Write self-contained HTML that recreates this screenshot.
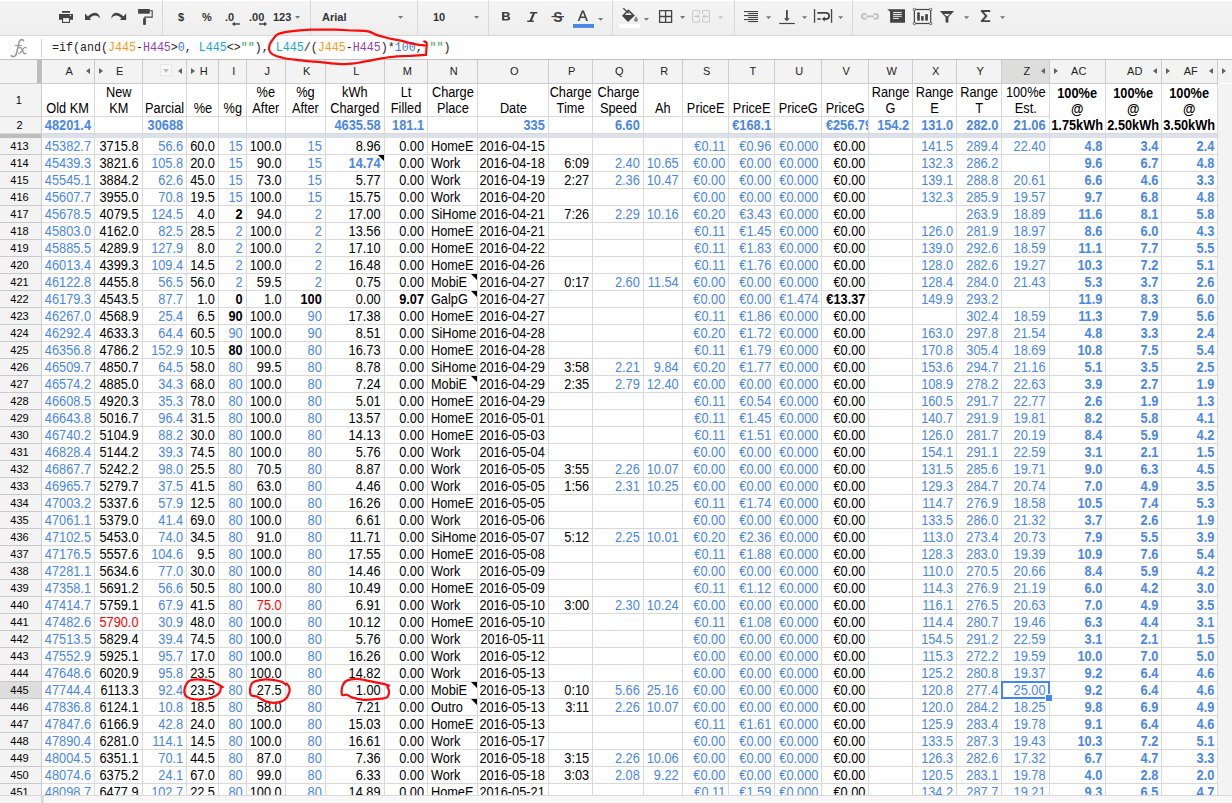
<!DOCTYPE html><html><head><meta charset="utf-8"><style>
*{margin:0;padding:0;box-sizing:border-box}
html,body{width:1232px;height:803px;overflow:hidden;background:#fff}
body{position:relative;font-family:"Liberation Sans",sans-serif;font-size:13px;color:#000}
.ab{position:absolute}
#tb{position:absolute;left:0;top:0;width:1232px;height:36px;background:linear-gradient(#f3f3f3,#f2f2f2 40%,#eeeeee);border-bottom:1px solid #d8d8d8;border-top:1px solid #ffffff}
.sep{position:absolute;top:0;width:1px;height:35px;background:#d9d9d9}
.tt{position:absolute;font-size:11px;font-weight:bold;color:#333;line-height:14px;top:10px}
.dd{position:absolute;width:0;height:0;border-left:2.5px solid transparent;border-right:2.5px solid transparent;border-top:3px solid #777}
#fb{position:absolute;left:0;top:36px;width:1232px;height:24px;background:#fff;border-bottom:1px solid #c4c4c4}
#fx{position:absolute;left:11px;top:36px;font-family:"Liberation Serif",serif;font-style:italic;font-size:20px;color:#9a9a9a;line-height:22px}
#fsep{position:absolute;left:41px;top:39px;width:1px;height:18px;background:#cfcfcf}
#ftxt{position:absolute;left:52px;top:40px;font-family:"Liberation Mono",monospace;font-size:13px;line-height:16px;color:#222;white-space:pre;transform:scaleX(0.896);transform-origin:0 50%}
.hc{position:absolute;top:60px;height:23px;padding-left:2.5px;background:#f3f3f3;text-align:center;font-size:11px;line-height:23px;color:#222}
.vl{position:absolute;width:1px;background:#d9d9d9}
.hl{position:absolute;height:1px;background:#d9d9d9}
.rh{position:absolute;left:0;width:41px;padding-right:2px;height:16px;background:#f3f3f3;text-align:center;font-size:11px;line-height:16px;color:#000}
.c{position:absolute;height:16px;line-height:16px;padding:0 3.3px 0 0;white-space:nowrap;text-align:right;font-size:14px;transform:scaleX(var(--sx));transform-origin:100% 50%}
.cl{transform-origin:0 50%;text-align:left;padding:0 0 0 3.2px}
:root{--sx:0.912}
.b{font-weight:bold}
.hd.b{padding-right:0}
.hd{position:absolute;text-align:center;line-height:16px;white-space:pre;font-size:14px;transform:scaleX(var(--sx));transform-origin:50% 50%}
.tri{position:absolute;width:0;height:0}
.cm{position:absolute;width:0;height:0;border-left:6px solid transparent;border-top:6px solid #000}
</style></head><body>
<div id="tb"></div>
<div class="sep" style="left:162px"></div>
<div class="sep" style="left:310px"></div>
<div class="sep" style="left:417px"></div>
<div class="sep" style="left:488px"></div>
<div class="sep" style="left:612px"></div>
<div class="sep" style="left:734px"></div>
<div class="sep" style="left:852px"></div>
<svg class="ab" style="left:0;top:0" width="1232" height="36" viewBox="0 0 1232 36">
<g fill="#444">
<!-- print -->
<rect x="62" y="11" width="8" height="1.8"/>
<path d="M59 14 H73 V19.8 H70 V23 H62 V19.8 H59 Z"/>
<rect x="63.1" y="18.1" width="5.9" height="3.8" fill="#f2f2f2"/>
<circle cx="70.4" cy="15.5" r="0.7" fill="#f2f2f2"/>
<!-- undo -->
<path d="M85 13.4 V19.9 H91.3 Z"/>
<path d="M87.3 17 C90.3 13.9 93 12.6 95.2 12.7 C98 12.9 99.6 15.2 100.1 18.6 C98.6 16.6 97 15.6 95 15.6 C93.2 15.6 91.4 16.6 89.3 18.9 Z"/>
<!-- redo -->
<path d="M126.2 13.4 V19.9 H119.9 Z"/>
<path d="M123.9 17 C120.9 13.9 118.2 12.6 116 12.7 C113.2 12.9 111.6 15.2 111.1 18.6 C112.6 16.6 114.2 15.6 116.2 15.6 C118 15.6 119.8 16.6 121.9 18.9 Z"/>
<!-- paint format -->
<rect x="138.1" y="9" width="11.7" height="4.7"/>
<path d="M149.8 10.8 H152.2 V17.1 H144.9 V18.5" fill="none" stroke="#444" stroke-width="1.1"/>
<rect x="143.1" y="18" width="2.8" height="7" rx="0.9"/>
<!-- text color A -->
<path d="M577.7 21 L581.8 10.6 H583.9 L588 21 H586.2 L585.1 18.1 H580.6 L579.5 21 Z M581.2 16.5 H584.5 L582.85 12.3 Z"/>
<rect x="573" y="24" width="21" height="3.9" fill="#4a86e8"/>
<!-- paint bucket -->
<path d="M622 15.7 L628.3 9.2 L634.8 15.4 L628 21.9 Z"/>
<path d="M624.9 14.9 L628.3 11.4 L631.9 14.9 Z" fill="#f4f4f4"/>
<path d="M623.3 8.2 L628.6 13.4" stroke="#444" stroke-width="1.3"/>
<path d="M636 16.2 C636.9 17.6 637.9 18.8 637.9 19.9 C637.9 21 637.1 21.7 636 21.7 C634.9 21.7 634.1 21 634.1 19.9 C634.1 18.8 635.1 17.6 636 16.2 Z" fill="#8a8a8a"/>
<rect x="619" y="24.1" width="20.8" height="3.8" fill="#fff"/>
<!-- borders -->
<path d="M659.6 10.6 H671.6 V22.4 H659.6 Z M665.6 10.6 V22.4 M659.6 16.5 H671.6" fill="none" stroke="#444" stroke-width="1.3"/>
<!-- merge (disabled) -->
<g fill="none" stroke="#c8c8c8" stroke-width="1">
<path d="M699.5 14.3 V10.6 H692.7 V22.1 H699.5 V18.6"/>
<path d="M702.6 14.3 V10.6 H709.4 V22.1 H702.6 V18.6"/>
<path d="M694.2 16.4 H698 M708 16.4 H704.2" stroke-width="1.2"/>
</g>
<path d="M697.5 14.2 L699.9 16.4 L697.5 18.6 Z M704.6 14.2 L702.2 16.4 L704.6 18.6 Z" fill="#c8c8c8"/>
<!-- align right -->
<rect x="744" y="11" width="14" height="1.1"/><rect x="748.2" y="13" width="9.8" height="1.1"/>
<rect x="744" y="15" width="14" height="1.1"/><rect x="748.2" y="17" width="9.8" height="1.1"/>
<rect x="744" y="19" width="14" height="1.1"/><rect x="748.2" y="21" width="9.8" height="1.1"/>
<!-- valign bottom -->
<rect x="786" y="10.1" width="1.8" height="8.6"/>
<path d="M783.9 18.2 H789.9 L786.9 21.3 Z"/>
<rect x="779.2" y="22.9" width="15.6" height="1.2"/>
<!-- wrap -->
<rect x="813.9" y="9" width="1.3" height="13.8"/><rect x="830.9" y="9" width="1.3" height="13.8"/>
<path d="M817.3 12.8 H825.8 C827.8 12.8 829.1 14.2 829.1 15.9 C829.1 17.7 827.8 19 825.8 19 H824" fill="none" stroke="#444" stroke-width="1.8"/>
<path d="M824.8 16.4 L821.8 19 L824.8 21.6 Z"/>
<rect x="817.3" y="18.2" width="3.4" height="1.6"/>
<!-- link (disabled) -->
<g fill="none" stroke="#c4c4c4" stroke-width="2">
<path d="M866.5 13.9 H864.4 C862.7 13.9 861.9 15 861.9 16.35 C861.9 17.7 862.7 18.8 864.4 18.8 H866.5"/>
<path d="M873.6 13.9 H875.6 C877.3 13.9 878.1 15 878.1 16.35 C878.1 17.7 877.3 18.8 875.6 18.8 H873.6"/>
<path d="M866 16.35 H874"/>
</g>
<!-- comment -->
<path d="M887.2 9.2 H905 V22.8 H890.1 V11.8 Z"/>
<g fill="#f2f2f2"><rect x="893" y="11.9" width="8.8" height="1"/><rect x="893" y="13.9" width="8.8" height="1"/><rect x="893" y="15.8" width="8.8" height="1"/><rect x="893" y="17.9" width="5.9" height="1"/></g>
<!-- chart -->
<rect x="914.4" y="9.5" width="16.3" height="14" fill="none" stroke="#444" stroke-width="1.2"/>
<g fill="#f2f2f2" stroke="#444" stroke-width="0.8"><circle cx="914.4" cy="9.5" r="1.2"/><circle cx="930.7" cy="9.5" r="1.2"/><circle cx="914.4" cy="23.5" r="1.2"/><circle cx="930.7" cy="23.5" r="1.2"/></g>
<rect x="917.2" y="12.4" width="2.6" height="8.2"/><rect x="921.1" y="16.1" width="2.6" height="4.5"/><rect x="925.2" y="14.2" width="2.7" height="6.4"/>
<!-- filter -->
<path d="M939.9 10.9 H954.1 L948.4 17.3 V22.5 H945.6 V17.3 Z M943.8 14 L947 16.6 L950.2 14 Z" fill-rule="evenodd"/>
<!-- sigma -->
<path d="M980.9 10.1 H990.2 V11.9 H983.9 L987.6 16 L983.9 20.3 H990.2 V22 H980.9 V20.5 L985 16 L980.9 11.6 Z"/>
</g>
<!-- dropdown arrows -->
<g fill="#777">
<path d="M295 16 H300.2 L297.6 18.8 Z"/>
<path d="M398 16 H403.2 L400.6 18.8 Z"/>
<path d="M474 16 H479.2 L476.6 18.8 Z"/>
<path d="M598 18 H603.2 L600.6 20.8 Z"/>
<path d="M643.8 18 H649 L646.4 20.8 Z"/>
<path d="M680 16.1 H685.2 L682.6 18.9 Z"/>
<path d="M766 16.2 H771.2 L768.6 19 Z"/>
<path d="M802 16.2 H807.2 L804.6 19 Z"/>
<path d="M838 16.2 H843.2 L840.6 19 Z"/>
<path d="M964 16.2 H969.2 L966.6 19 Z"/>
<path d="M1000 16.2 H1005.2 L1002.6 19 Z"/>
</g>
<path d="M718 16.2 H723.2 L720.6 19 Z" fill="#c8c8c8"/>
<!-- .0 / .00 arrows -->
<path d="M231.8 24 L234.8 21.8 V23.3 H239.8 V24.7 H234.8 V26.2 Z" fill="#444"/>
<path d="M267.2 24 L264.2 21.8 V23.3 H259 V24.7 H264.2 V26.2 Z" fill="#444"/>
</svg>
<div class="tt" style="left:178px">$</div>
<div class="tt" style="left:202px">%</div>
<div class="tt" style="left:225px">.0</div>
<div class="tt" style="left:249px">.00</div>
<div class="tt" style="left:273px">123</div>
<div class="tt" style="left:322px">Arial</div>
<div class="tt" style="left:433px">10</div>
<svg class="ab" style="left:501.8px;top:12.2px" width="9" height="9" viewBox="0 0 9 9"><path fill-rule="evenodd" fill="#444" d="M0 0 H4.7 C6.7 0 7.7 1 7.7 2.3 C7.7 3.3 7.1 3.9 6.3 4.2 C7.4 4.5 8.2 5.3 8.2 6.4 C8.2 7.8 7.1 8.5 5.1 8.5 H0 Z M2.3 1.6 V3.5 H4.3 C5 3.5 5.4 3.2 5.4 2.55 C5.4 1.9 5 1.6 4.3 1.6 Z M2.3 5 V6.9 H4.6 C5.4 6.9 5.8 6.5 5.8 5.95 C5.8 5.4 5.4 5 4.6 5 Z"/></svg>
<svg class="ab" style="left:527px;top:12px" width="11" height="10" viewBox="0 0 11 10"><path d="M3 0 H10.5 L10.2 1.6 H8 L5 8.4 H7 L6.7 10 H0 L0.3 8.4 H2.6 L5.6 1.6 H2.7 Z" fill="#444"/></svg>
<svg class="ab" style="left:551px;top:11px" width="14" height="12" viewBox="0 0 14 12">
<text x="6.8" y="10.6" text-anchor="middle" font-family="Liberation Sans" font-weight="bold" font-size="14" fill="#444">S</text>
<rect x="0.5" y="5" width="12.5" height="1.2" fill="#444"/></svg>
<div id="fb"></div>
<svg class="ab" style="left:0;top:0" width="40" height="60" viewBox="0 0 40 60"><g fill="none" stroke="#999" stroke-linecap="round"><path d="M23.6 40.6 C23.1 39.7 22.3 39.3 21.4 39.5 C19.7 39.9 19 41.8 18.5 44.3 L16.7 52.6 C16.1 55.3 14.7 56.7 12.8 56.6 C12.1 56.5 11.6 56.1 11.4 55.6" stroke-width="1.6"/><path d="M15.4 45.5 H21.6" stroke-width="1.1"/><path d="M18.9 47.9 C19.8 47 20.9 47.2 21.5 48.4 L23.6 52.9 C24.1 53.9 25 54.1 25.9 53.2" stroke-width="1.4"/><path d="M26.3 48 C25.8 47 24.8 47 24 47.9 L20.3 52.8 C19.8 53.6 19.1 53.7 18.6 53.2" stroke-width="1.1"/></g></svg>
<div id="fsep"></div>
<div id="ftxt"><span style="color:#222">=if(and(</span><span style="color:#f59a23">J445</span><span style="color:#222">-</span><span style="color:#8e44ad">H445</span><span style="color:#222">&gt;</span><span style="color:#3d79e0">0</span><span style="color:#222">, </span><span style="color:#1aa3d9">L445</span><span style="color:#222">&lt;&gt;</span><span style="color:#3aa345">&quot;&quot;</span><span style="color:#222">), </span><span style="color:#1aa3d9">L445</span><span style="color:#222">/(</span><span style="color:#f59a23">J445</span><span style="color:#222">-</span><span style="color:#8e44ad">H445</span><span style="color:#222">)*</span><span style="color:#3d79e0">100</span><span style="color:#222">, </span><span style="color:#3aa345">&quot;&quot;</span><span style="color:#222">)</span></div>
<div class="ab" style="left:0;top:59px;width:1232px;height:1px;background:#c0c0c0"></div>
<div class="ab" style="left:0;top:60px;width:1232px;height:23px;background:#f3f3f3"></div>
<div class="ab" style="left:0;top:83px;width:1218px;height:1px;background:#cbcbcb"></div>
<div class="hc" style="left:42px;width:52px;background:#f3f3f3">A</div>
<div class="ab" style="left:94px;top:60px;width:1px;height:23px;background:#cccccc"></div>
<div class="hc" style="left:95px;width:47px;background:#f3f3f3">E</div>
<div class="ab" style="left:142px;top:60px;width:1px;height:23px;background:#cccccc"></div>
<div class="hc" style="left:143px;width:43px;background:#f3f3f3"></div>
<div class="ab" style="left:186px;top:60px;width:1px;height:23px;background:#cccccc"></div>
<div class="hc" style="left:187px;width:31px;background:#f3f3f3">H</div>
<div class="ab" style="left:218px;top:60px;width:1px;height:23px;background:#cccccc"></div>
<div class="hc" style="left:219px;width:27px;background:#f3f3f3">I</div>
<div class="ab" style="left:246px;top:60px;width:1px;height:23px;background:#cccccc"></div>
<div class="hc" style="left:247px;width:38px;background:#f3f3f3">J</div>
<div class="ab" style="left:285px;top:60px;width:1px;height:23px;background:#cccccc"></div>
<div class="hc" style="left:286px;width:39px;background:#f3f3f3">K</div>
<div class="ab" style="left:325px;top:60px;width:1px;height:23px;background:#cccccc"></div>
<div class="hc" style="left:326px;width:58px;background:#f3f3f3">L</div>
<div class="ab" style="left:384px;top:60px;width:1px;height:23px;background:#cccccc"></div>
<div class="hc" style="left:385px;width:42px;background:#f3f3f3">M</div>
<div class="ab" style="left:427px;top:60px;width:1px;height:23px;background:#cccccc"></div>
<div class="hc" style="left:428px;width:49px;background:#f3f3f3">N</div>
<div class="ab" style="left:477px;top:60px;width:1px;height:23px;background:#cccccc"></div>
<div class="hc" style="left:478px;width:70px;background:#f3f3f3">O</div>
<div class="ab" style="left:548px;top:60px;width:1px;height:23px;background:#cccccc"></div>
<div class="hc" style="left:549px;width:43px;background:#f3f3f3">P</div>
<div class="ab" style="left:592px;top:60px;width:1px;height:23px;background:#cccccc"></div>
<div class="hc" style="left:593px;width:50px;background:#f3f3f3">Q</div>
<div class="ab" style="left:643px;top:60px;width:1px;height:23px;background:#cccccc"></div>
<div class="hc" style="left:644px;width:38px;background:#f3f3f3">R</div>
<div class="ab" style="left:682px;top:60px;width:1px;height:23px;background:#cccccc"></div>
<div class="hc" style="left:683px;width:45px;background:#f3f3f3">S</div>
<div class="ab" style="left:728px;top:60px;width:1px;height:23px;background:#cccccc"></div>
<div class="hc" style="left:729px;width:45px;background:#f3f3f3">T</div>
<div class="ab" style="left:774px;top:60px;width:1px;height:23px;background:#cccccc"></div>
<div class="hc" style="left:775px;width:46px;background:#f3f3f3">U</div>
<div class="ab" style="left:821px;top:60px;width:1px;height:23px;background:#cccccc"></div>
<div class="hc" style="left:822px;width:46px;background:#f3f3f3">V</div>
<div class="ab" style="left:868px;top:60px;width:1px;height:23px;background:#cccccc"></div>
<div class="hc" style="left:869px;width:43px;background:#f3f3f3">W</div>
<div class="ab" style="left:912px;top:60px;width:1px;height:23px;background:#cccccc"></div>
<div class="hc" style="left:913px;width:43px;background:#f3f3f3">X</div>
<div class="ab" style="left:956px;top:60px;width:1px;height:23px;background:#cccccc"></div>
<div class="hc" style="left:957px;width:44px;background:#f3f3f3">Y</div>
<div class="ab" style="left:1001px;top:60px;width:1px;height:23px;background:#cccccc"></div>
<div class="hc" style="left:1002px;width:47px;background:#dddddd">Z</div>
<div class="ab" style="left:1049px;top:60px;width:1px;height:23px;background:#cccccc"></div>
<div class="hc" style="left:1050px;width:55px;background:#f3f3f3">AC</div>
<div class="ab" style="left:1105px;top:60px;width:1px;height:23px;background:#cccccc"></div>
<div class="hc" style="left:1106px;width:55px;background:#f3f3f3">AD</div>
<div class="ab" style="left:1161px;top:60px;width:1px;height:23px;background:#cccccc"></div>
<div class="hc" style="left:1162px;width:55px;background:#f3f3f3">AF</div>
<div class="ab" style="left:1217px;top:60px;width:1px;height:23px;background:#cccccc"></div>
<div class="ab" style="left:37px;top:60px;width:5px;height:23px;background:#bdbdbd"></div>
<div class="ab" style="left:1218px;top:84px;width:14px;height:719px;background:#f3f3f3"></div>
<div class="ab" style="left:1218px;top:60px;width:14px;height:23px;background:#f3f3f3"></div>
<div class="tri" style="left:86px;top:68px;border-top:3.75px solid transparent;border-bottom:3.75px solid transparent;border-right:4.5px solid #616161"></div>
<div class="tri" style="left:99px;top:68px;border-top:3.75px solid transparent;border-bottom:3.75px solid transparent;border-left:4.5px solid #616161"></div>
<div class="tri" style="left:178px;top:68px;border-top:3.75px solid transparent;border-bottom:3.75px solid transparent;border-right:4.5px solid #616161"></div>
<div class="tri" style="left:191px;top:68px;border-top:3.75px solid transparent;border-bottom:3.75px solid transparent;border-left:4.5px solid #616161"></div>
<div class="tri" style="left:1041px;top:68px;border-top:3.75px solid transparent;border-bottom:3.75px solid transparent;border-right:4.5px solid #616161"></div>
<div class="tri" style="left:1054px;top:68px;border-top:3.75px solid transparent;border-bottom:3.75px solid transparent;border-left:4.5px solid #616161"></div>
<div class="tri" style="left:1153px;top:68px;border-top:3.75px solid transparent;border-bottom:3.75px solid transparent;border-right:4.5px solid #616161"></div>
<div class="tri" style="left:1166px;top:68px;border-top:3.75px solid transparent;border-bottom:3.75px solid transparent;border-left:4.5px solid #616161"></div>
<div class="tri" style="left:1209px;top:68px;border-top:3.75px solid transparent;border-bottom:3.75px solid transparent;border-right:4.5px solid #616161"></div>
<div class="tri" style="left:1222px;top:68px;border-top:3.75px solid transparent;border-bottom:3.75px solid transparent;border-left:4.5px solid #616161"></div>
<div class="ab" style="left:160px;top:64px;width:12px;height:12px;background:#f8f8f8;border:1px solid #e4e4e4"></div>
<div class="tri" style="left:163px;top:69px;border-left:3.5px solid transparent;border-right:3.5px solid transparent;border-top:4px solid #bdbdbd"></div>
<div class="ab" style="left:0;top:84px;width:41px;height:49px;background:#f3f3f3"></div>
<div class="ab" style="left:0;top:92px;width:37.5px;text-align:center;font-size:11px;line-height:16px">1</div>
<div class="ab" style="left:0;top:117px;width:39px;text-align:center;font-size:11px;line-height:16px">2</div>
<div class="ab" style="left:0;top:116px;width:41px;height:1px;background:#d0d0d0"></div>
<div class="hd" style="left:29.49px;top:100px;width:77.02px;height:16px">Old KM</div>
<div class="hd" style="left:82.73px;top:84px;width:71.54px;height:32px">New
KM</div>
<div class="hd" style="left:130.93px;top:100px;width:67.15px;height:16px">Parcial</div>
<div class="hd" style="left:175.50px;top:100px;width:53.99px;height:16px">%e</div>
<div class="hd" style="left:207.70px;top:100px;width:49.61px;height:16px">%g</div>
<div class="hd" style="left:235.17px;top:84px;width:61.67px;height:32px">%e
After</div>
<div class="hd" style="left:274.12px;top:84px;width:62.76px;height:32px">%g
After</div>
<div class="hd" style="left:313.20px;top:84px;width:83.60px;height:32px">kWh
Charged</div>
<div class="hd" style="left:372.97px;top:84px;width:66.05px;height:32px">Lt
Filled</div>
<div class="hd" style="left:415.64px;top:84px;width:73.73px;height:32px">Charge
Place</div>
<div class="hd" style="left:464.62px;top:100px;width:96.75px;height:16px">Date</div>
<div class="hd" style="left:536.93px;top:84px;width:67.15px;height:32px">Charge
Time</div>
<div class="hd" style="left:580.59px;top:84px;width:74.82px;height:32px">Charge
Speed</div>
<div class="hd" style="left:632.17px;top:100px;width:61.67px;height:16px">Ah</div>
<div class="hd" style="left:670.83px;top:100px;width:69.34px;height:16px">PriceE</div>
<div class="hd" style="left:716.83px;top:100px;width:69.34px;height:16px">PriceE</div>
<div class="hd" style="left:762.78px;top:100px;width:70.44px;height:16px">PriceG</div>
<div class="hd" style="left:809.78px;top:100px;width:70.44px;height:16px">PriceG</div>
<div class="hd" style="left:856.93px;top:84px;width:67.15px;height:32px">Range
G</div>
<div class="hd" style="left:900.93px;top:84px;width:67.15px;height:32px">Range
E</div>
<div class="hd" style="left:944.88px;top:84px;width:68.25px;height:32px">Range
T</div>
<div class="hd" style="left:989.73px;top:84px;width:71.54px;height:32px">100%e
Est.</div>
<div class="hd b" style="left:1037.35px;top:85px;width:80.31px;height:48px">100%e
@
1.75kWh</div>
<div class="hd b" style="left:1093.35px;top:85px;width:80.31px;height:48px">100%e
@
2.50kWh</div>
<div class="hd b" style="left:1149.35px;top:85px;width:80.31px;height:48px">100%e
@
3.50kWh</div>
<div class="c b" style="left:16.98px;top:117px;width:77.02px;color:#4a86e8">48201.4</div>
<div class="c b" style="left:118.85px;top:117px;width:67.15px;color:#4a86e8">30688</div>
<div class="c b" style="left:300.40px;top:117px;width:83.60px;color:#4a86e8">4635.58</div>
<div class="c b" style="left:360.95px;top:117px;width:66.05px;color:#4a86e8">181.1</div>
<div class="c b" style="left:451.25px;top:117px;width:96.75px;color:#4a86e8">335</div>
<div class="c b" style="left:568.18px;top:117px;width:74.82px;color:#4a86e8">6.60</div>
<div class="c b" style="left:704.66px;top:117px;width:69.34px;color:#4a86e8">€168.1</div>
<div class="c b" style="left:844.85px;top:117px;width:67.15px;color:#4a86e8">154.2</div>
<div class="c b" style="left:888.85px;top:117px;width:67.15px;color:#4a86e8">131.0</div>
<div class="c b" style="left:932.75px;top:117px;width:68.25px;color:#4a86e8">282.0</div>
<div class="c b" style="left:977.46px;top:117px;width:71.54px;color:#4a86e8">21.06</div>
<div class="ab" style="left:822px;top:117px;width:46px;height:16px;overflow:hidden"><div class="c b cl" style="left:0;top:0;width:90px;color:#4a86e8;padding-left:4.3px">€256.79</div></div>
<div class="hl" style="left:42px;top:116px;width:1007px"></div>
<div class="ab" style="left:0;top:133px;width:1218px;height:1px;background:#d9d9d9"></div>
<div class="ab" style="left:42px;top:134px;width:1176px;height:4px;background:#dbe0e9"></div>
<div class="ab" style="left:0;top:134px;width:42px;height:4px;background:#bdbdbd"></div>
<div class="ab" style="left:0;top:138px;width:41px;height:657px;background:#f3f3f3"></div>
<div class="rh" style="top:138px;background:#f3f3f3">413</div>
<div class="ab" style="left:0;top:154px;width:41px;height:1px;background:#c9c9c9"></div>
<div class="hl" style="left:42px;top:154px;width:1176px"></div>
<div class="c" style="left:16.98px;top:138px;width:77.02px;color:#4a86e8">45382.7</div>
<div class="c" style="left:70.46px;top:138px;width:71.54px;color:#000">3715.8</div>
<div class="c" style="left:118.85px;top:138px;width:67.15px;color:#4a86e8">56.6</div>
<div class="c" style="left:164.01px;top:138px;width:53.99px;color:#000">60.0</div>
<div class="c" style="left:196.39px;top:138px;width:49.61px;color:#4a86e8">15</div>
<div class="c" style="left:223.33px;top:138px;width:61.67px;color:#000">100.0</div>
<div class="c" style="left:262.24px;top:138px;width:62.76px;color:#4a86e8">15</div>
<div class="c" style="left:300.40px;top:138px;width:83.60px;color:#000">8.96</div>
<div class="c" style="left:360.95px;top:138px;width:66.05px;color:#000">0.00</div>
<div class="c cl" style="left:428.00px;top:138px;width:73.73px;color:#000">HomeE</div>
<div class="c" style="left:451.25px;top:138px;width:96.75px;color:#000">2016-04-15</div>
<div class="c" style="left:658.66px;top:138px;width:69.34px;color:#4a86e8">€0.11</div>
<div class="c" style="left:704.66px;top:138px;width:69.34px;color:#4a86e8">€0.96</div>
<div class="c" style="left:750.56px;top:138px;width:70.44px;color:#4a86e8">€0.000</div>
<div class="c" style="left:797.56px;top:138px;width:70.44px;color:#000">€0.00</div>
<div class="c" style="left:888.85px;top:138px;width:67.15px;color:#4a86e8">141.5</div>
<div class="c" style="left:932.75px;top:138px;width:68.25px;color:#4a86e8">289.4</div>
<div class="c" style="left:977.46px;top:138px;width:71.54px;color:#4a86e8">22.40</div>
<div class="c b" style="left:1024.69px;top:138px;width:80.31px;color:#4a86e8">4.8</div>
<div class="c b" style="left:1080.69px;top:138px;width:80.31px;color:#4a86e8">3.4</div>
<div class="c b" style="left:1136.69px;top:138px;width:80.31px;color:#4a86e8">2.4</div>
<div class="rh" style="top:155px;background:#f3f3f3">414</div>
<div class="ab" style="left:0;top:171px;width:41px;height:1px;background:#c9c9c9"></div>
<div class="hl" style="left:42px;top:171px;width:1176px"></div>
<div class="c" style="left:16.98px;top:155px;width:77.02px;color:#4a86e8">45439.3</div>
<div class="c" style="left:70.46px;top:155px;width:71.54px;color:#000">3821.6</div>
<div class="c" style="left:118.85px;top:155px;width:67.15px;color:#4a86e8">105.8</div>
<div class="c" style="left:164.01px;top:155px;width:53.99px;color:#000">20.0</div>
<div class="c" style="left:196.39px;top:155px;width:49.61px;color:#4a86e8">15</div>
<div class="c" style="left:223.33px;top:155px;width:61.67px;color:#000">90.0</div>
<div class="c" style="left:262.24px;top:155px;width:62.76px;color:#4a86e8">15</div>
<div class="c b" style="left:300.40px;top:155px;width:83.60px;color:#4a86e8">14.74</div>
<div class="cm" style="left:378px;top:155px"></div>
<div class="c" style="left:360.95px;top:155px;width:66.05px;color:#000">0.00</div>
<div class="c cl" style="left:428.00px;top:155px;width:73.73px;color:#000">Work</div>
<div class="c" style="left:451.25px;top:155px;width:96.75px;color:#000">2016-04-18</div>
<div class="c" style="left:524.85px;top:155px;width:67.15px;color:#000">6:09</div>
<div class="c" style="left:568.18px;top:155px;width:74.82px;color:#4a86e8">2.40</div>
<div class="c" style="left:620.33px;top:155px;width:61.67px;color:#4a86e8">10.65</div>
<div class="c" style="left:658.66px;top:155px;width:69.34px;color:#4a86e8">€0.00</div>
<div class="c" style="left:704.66px;top:155px;width:69.34px;color:#4a86e8">€0.00</div>
<div class="c" style="left:750.56px;top:155px;width:70.44px;color:#4a86e8">€0.000</div>
<div class="c" style="left:797.56px;top:155px;width:70.44px;color:#000">€0.00</div>
<div class="c" style="left:888.85px;top:155px;width:67.15px;color:#4a86e8">132.3</div>
<div class="c" style="left:932.75px;top:155px;width:68.25px;color:#4a86e8">286.2</div>
<div class="c b" style="left:1024.69px;top:155px;width:80.31px;color:#4a86e8">9.6</div>
<div class="c b" style="left:1080.69px;top:155px;width:80.31px;color:#4a86e8">6.7</div>
<div class="c b" style="left:1136.69px;top:155px;width:80.31px;color:#4a86e8">4.8</div>
<div class="rh" style="top:172px;background:#f3f3f3">415</div>
<div class="ab" style="left:0;top:188px;width:41px;height:1px;background:#c9c9c9"></div>
<div class="hl" style="left:42px;top:188px;width:1176px"></div>
<div class="c" style="left:16.98px;top:172px;width:77.02px;color:#4a86e8">45545.1</div>
<div class="c" style="left:70.46px;top:172px;width:71.54px;color:#000">3884.2</div>
<div class="c" style="left:118.85px;top:172px;width:67.15px;color:#4a86e8">62.6</div>
<div class="c" style="left:164.01px;top:172px;width:53.99px;color:#000">45.0</div>
<div class="c" style="left:196.39px;top:172px;width:49.61px;color:#4a86e8">15</div>
<div class="c" style="left:223.33px;top:172px;width:61.67px;color:#000">73.0</div>
<div class="c" style="left:262.24px;top:172px;width:62.76px;color:#4a86e8">15</div>
<div class="c" style="left:300.40px;top:172px;width:83.60px;color:#000">5.77</div>
<div class="c" style="left:360.95px;top:172px;width:66.05px;color:#000">0.00</div>
<div class="c cl" style="left:428.00px;top:172px;width:73.73px;color:#000">Work</div>
<div class="c" style="left:451.25px;top:172px;width:96.75px;color:#000">2016-04-19</div>
<div class="c" style="left:524.85px;top:172px;width:67.15px;color:#000">2:27</div>
<div class="c" style="left:568.18px;top:172px;width:74.82px;color:#4a86e8">2.36</div>
<div class="c" style="left:620.33px;top:172px;width:61.67px;color:#4a86e8">10.47</div>
<div class="c" style="left:658.66px;top:172px;width:69.34px;color:#4a86e8">€0.00</div>
<div class="c" style="left:704.66px;top:172px;width:69.34px;color:#4a86e8">€0.00</div>
<div class="c" style="left:750.56px;top:172px;width:70.44px;color:#4a86e8">€0.000</div>
<div class="c" style="left:797.56px;top:172px;width:70.44px;color:#000">€0.00</div>
<div class="c" style="left:888.85px;top:172px;width:67.15px;color:#4a86e8">139.1</div>
<div class="c" style="left:932.75px;top:172px;width:68.25px;color:#4a86e8">288.8</div>
<div class="c" style="left:977.46px;top:172px;width:71.54px;color:#4a86e8">20.61</div>
<div class="c b" style="left:1024.69px;top:172px;width:80.31px;color:#4a86e8">6.6</div>
<div class="c b" style="left:1080.69px;top:172px;width:80.31px;color:#4a86e8">4.6</div>
<div class="c b" style="left:1136.69px;top:172px;width:80.31px;color:#4a86e8">3.3</div>
<div class="rh" style="top:189px;background:#f3f3f3">416</div>
<div class="ab" style="left:0;top:205px;width:41px;height:1px;background:#c9c9c9"></div>
<div class="hl" style="left:42px;top:205px;width:1176px"></div>
<div class="c" style="left:16.98px;top:189px;width:77.02px;color:#4a86e8">45607.7</div>
<div class="c" style="left:70.46px;top:189px;width:71.54px;color:#000">3955.0</div>
<div class="c" style="left:118.85px;top:189px;width:67.15px;color:#4a86e8">70.8</div>
<div class="c" style="left:164.01px;top:189px;width:53.99px;color:#000">19.5</div>
<div class="c" style="left:196.39px;top:189px;width:49.61px;color:#4a86e8">15</div>
<div class="c" style="left:223.33px;top:189px;width:61.67px;color:#000">100.0</div>
<div class="c" style="left:262.24px;top:189px;width:62.76px;color:#4a86e8">15</div>
<div class="c" style="left:300.40px;top:189px;width:83.60px;color:#000">15.75</div>
<div class="c" style="left:360.95px;top:189px;width:66.05px;color:#000">0.00</div>
<div class="c cl" style="left:428.00px;top:189px;width:73.73px;color:#000">Work</div>
<div class="c" style="left:451.25px;top:189px;width:96.75px;color:#000">2016-04-20</div>
<div class="c" style="left:658.66px;top:189px;width:69.34px;color:#4a86e8">€0.00</div>
<div class="c" style="left:704.66px;top:189px;width:69.34px;color:#4a86e8">€0.00</div>
<div class="c" style="left:750.56px;top:189px;width:70.44px;color:#4a86e8">€0.000</div>
<div class="c" style="left:797.56px;top:189px;width:70.44px;color:#000">€0.00</div>
<div class="c" style="left:888.85px;top:189px;width:67.15px;color:#4a86e8">132.3</div>
<div class="c" style="left:932.75px;top:189px;width:68.25px;color:#4a86e8">285.9</div>
<div class="c" style="left:977.46px;top:189px;width:71.54px;color:#4a86e8">19.57</div>
<div class="c b" style="left:1024.69px;top:189px;width:80.31px;color:#4a86e8">9.7</div>
<div class="c b" style="left:1080.69px;top:189px;width:80.31px;color:#4a86e8">6.8</div>
<div class="c b" style="left:1136.69px;top:189px;width:80.31px;color:#4a86e8">4.8</div>
<div class="rh" style="top:206px;background:#f3f3f3">417</div>
<div class="ab" style="left:0;top:222px;width:41px;height:1px;background:#c9c9c9"></div>
<div class="hl" style="left:42px;top:222px;width:1176px"></div>
<div class="c" style="left:16.98px;top:206px;width:77.02px;color:#4a86e8">45678.5</div>
<div class="c" style="left:70.46px;top:206px;width:71.54px;color:#000">4079.5</div>
<div class="c" style="left:118.85px;top:206px;width:67.15px;color:#4a86e8">124.5</div>
<div class="c" style="left:164.01px;top:206px;width:53.99px;color:#000">4.0</div>
<div class="c b" style="left:196.39px;top:206px;width:49.61px;color:#000">2</div>
<div class="c" style="left:223.33px;top:206px;width:61.67px;color:#000">94.0</div>
<div class="c" style="left:262.24px;top:206px;width:62.76px;color:#4a86e8">2</div>
<div class="c" style="left:300.40px;top:206px;width:83.60px;color:#000">17.00</div>
<div class="c" style="left:360.95px;top:206px;width:66.05px;color:#000">0.00</div>
<div class="c cl" style="left:428.00px;top:206px;width:73.73px;color:#000">SiHome</div>
<div class="c" style="left:451.25px;top:206px;width:96.75px;color:#000">2016-04-21</div>
<div class="c" style="left:524.85px;top:206px;width:67.15px;color:#000">7:26</div>
<div class="c" style="left:568.18px;top:206px;width:74.82px;color:#4a86e8">2.29</div>
<div class="c" style="left:620.33px;top:206px;width:61.67px;color:#4a86e8">10.16</div>
<div class="c" style="left:658.66px;top:206px;width:69.34px;color:#4a86e8">€0.20</div>
<div class="c" style="left:704.66px;top:206px;width:69.34px;color:#4a86e8">€3.43</div>
<div class="c" style="left:750.56px;top:206px;width:70.44px;color:#4a86e8">€0.000</div>
<div class="c" style="left:797.56px;top:206px;width:70.44px;color:#000">€0.00</div>
<div class="c" style="left:932.75px;top:206px;width:68.25px;color:#4a86e8">263.9</div>
<div class="c" style="left:977.46px;top:206px;width:71.54px;color:#4a86e8">18.89</div>
<div class="c b" style="left:1024.69px;top:206px;width:80.31px;color:#4a86e8">11.6</div>
<div class="c b" style="left:1080.69px;top:206px;width:80.31px;color:#4a86e8">8.1</div>
<div class="c b" style="left:1136.69px;top:206px;width:80.31px;color:#4a86e8">5.8</div>
<div class="rh" style="top:223px;background:#f3f3f3">418</div>
<div class="ab" style="left:0;top:239px;width:41px;height:1px;background:#c9c9c9"></div>
<div class="hl" style="left:42px;top:239px;width:1176px"></div>
<div class="c" style="left:16.98px;top:223px;width:77.02px;color:#4a86e8">45803.0</div>
<div class="c" style="left:70.46px;top:223px;width:71.54px;color:#000">4162.0</div>
<div class="c" style="left:118.85px;top:223px;width:67.15px;color:#4a86e8">82.5</div>
<div class="c" style="left:164.01px;top:223px;width:53.99px;color:#000">28.5</div>
<div class="c" style="left:196.39px;top:223px;width:49.61px;color:#4a86e8">2</div>
<div class="c" style="left:223.33px;top:223px;width:61.67px;color:#000">100.0</div>
<div class="c" style="left:262.24px;top:223px;width:62.76px;color:#4a86e8">2</div>
<div class="c" style="left:300.40px;top:223px;width:83.60px;color:#000">13.56</div>
<div class="c" style="left:360.95px;top:223px;width:66.05px;color:#000">0.00</div>
<div class="c cl" style="left:428.00px;top:223px;width:73.73px;color:#000">HomeE</div>
<div class="c" style="left:451.25px;top:223px;width:96.75px;color:#000">2016-04-21</div>
<div class="c" style="left:658.66px;top:223px;width:69.34px;color:#4a86e8">€0.11</div>
<div class="c" style="left:704.66px;top:223px;width:69.34px;color:#4a86e8">€1.45</div>
<div class="c" style="left:750.56px;top:223px;width:70.44px;color:#4a86e8">€0.000</div>
<div class="c" style="left:797.56px;top:223px;width:70.44px;color:#000">€0.00</div>
<div class="c" style="left:888.85px;top:223px;width:67.15px;color:#4a86e8">126.0</div>
<div class="c" style="left:932.75px;top:223px;width:68.25px;color:#4a86e8">281.9</div>
<div class="c" style="left:977.46px;top:223px;width:71.54px;color:#4a86e8">18.97</div>
<div class="c b" style="left:1024.69px;top:223px;width:80.31px;color:#4a86e8">8.6</div>
<div class="c b" style="left:1080.69px;top:223px;width:80.31px;color:#4a86e8">6.0</div>
<div class="c b" style="left:1136.69px;top:223px;width:80.31px;color:#4a86e8">4.3</div>
<div class="rh" style="top:240px;background:#f3f3f3">419</div>
<div class="ab" style="left:0;top:256px;width:41px;height:1px;background:#c9c9c9"></div>
<div class="hl" style="left:42px;top:256px;width:1176px"></div>
<div class="c" style="left:16.98px;top:240px;width:77.02px;color:#4a86e8">45885.5</div>
<div class="c" style="left:70.46px;top:240px;width:71.54px;color:#000">4289.9</div>
<div class="c" style="left:118.85px;top:240px;width:67.15px;color:#4a86e8">127.9</div>
<div class="c" style="left:164.01px;top:240px;width:53.99px;color:#000">8.0</div>
<div class="c" style="left:196.39px;top:240px;width:49.61px;color:#4a86e8">2</div>
<div class="c" style="left:223.33px;top:240px;width:61.67px;color:#000">100.0</div>
<div class="c" style="left:262.24px;top:240px;width:62.76px;color:#4a86e8">2</div>
<div class="c" style="left:300.40px;top:240px;width:83.60px;color:#000">17.10</div>
<div class="c" style="left:360.95px;top:240px;width:66.05px;color:#000">0.00</div>
<div class="c cl" style="left:428.00px;top:240px;width:73.73px;color:#000">HomeE</div>
<div class="c" style="left:451.25px;top:240px;width:96.75px;color:#000">2016-04-22</div>
<div class="c" style="left:658.66px;top:240px;width:69.34px;color:#4a86e8">€0.11</div>
<div class="c" style="left:704.66px;top:240px;width:69.34px;color:#4a86e8">€1.83</div>
<div class="c" style="left:750.56px;top:240px;width:70.44px;color:#4a86e8">€0.000</div>
<div class="c" style="left:797.56px;top:240px;width:70.44px;color:#000">€0.00</div>
<div class="c" style="left:888.85px;top:240px;width:67.15px;color:#4a86e8">139.0</div>
<div class="c" style="left:932.75px;top:240px;width:68.25px;color:#4a86e8">292.6</div>
<div class="c" style="left:977.46px;top:240px;width:71.54px;color:#4a86e8">18.59</div>
<div class="c b" style="left:1024.69px;top:240px;width:80.31px;color:#4a86e8">11.1</div>
<div class="c b" style="left:1080.69px;top:240px;width:80.31px;color:#4a86e8">7.7</div>
<div class="c b" style="left:1136.69px;top:240px;width:80.31px;color:#4a86e8">5.5</div>
<div class="rh" style="top:257px;background:#f3f3f3">420</div>
<div class="ab" style="left:0;top:273px;width:41px;height:1px;background:#c9c9c9"></div>
<div class="hl" style="left:42px;top:273px;width:1176px"></div>
<div class="c" style="left:16.98px;top:257px;width:77.02px;color:#4a86e8">46013.4</div>
<div class="c" style="left:70.46px;top:257px;width:71.54px;color:#000">4399.3</div>
<div class="c" style="left:118.85px;top:257px;width:67.15px;color:#4a86e8">109.4</div>
<div class="c" style="left:164.01px;top:257px;width:53.99px;color:#000">14.5</div>
<div class="c" style="left:196.39px;top:257px;width:49.61px;color:#4a86e8">2</div>
<div class="c" style="left:223.33px;top:257px;width:61.67px;color:#000">100.0</div>
<div class="c" style="left:262.24px;top:257px;width:62.76px;color:#4a86e8">2</div>
<div class="c" style="left:300.40px;top:257px;width:83.60px;color:#000">16.48</div>
<div class="c" style="left:360.95px;top:257px;width:66.05px;color:#000">0.00</div>
<div class="c cl" style="left:428.00px;top:257px;width:73.73px;color:#000">HomeE</div>
<div class="c" style="left:451.25px;top:257px;width:96.75px;color:#000">2016-04-26</div>
<div class="c" style="left:658.66px;top:257px;width:69.34px;color:#4a86e8">€0.11</div>
<div class="c" style="left:704.66px;top:257px;width:69.34px;color:#4a86e8">€1.76</div>
<div class="c" style="left:750.56px;top:257px;width:70.44px;color:#4a86e8">€0.000</div>
<div class="c" style="left:797.56px;top:257px;width:70.44px;color:#000">€0.00</div>
<div class="c" style="left:888.85px;top:257px;width:67.15px;color:#4a86e8">128.0</div>
<div class="c" style="left:932.75px;top:257px;width:68.25px;color:#4a86e8">282.6</div>
<div class="c" style="left:977.46px;top:257px;width:71.54px;color:#4a86e8">19.27</div>
<div class="c b" style="left:1024.69px;top:257px;width:80.31px;color:#4a86e8">10.3</div>
<div class="c b" style="left:1080.69px;top:257px;width:80.31px;color:#4a86e8">7.2</div>
<div class="c b" style="left:1136.69px;top:257px;width:80.31px;color:#4a86e8">5.1</div>
<div class="rh" style="top:274px;background:#f3f3f3">421</div>
<div class="ab" style="left:0;top:290px;width:41px;height:1px;background:#c9c9c9"></div>
<div class="hl" style="left:42px;top:290px;width:1176px"></div>
<div class="c" style="left:16.98px;top:274px;width:77.02px;color:#4a86e8">46122.8</div>
<div class="c" style="left:70.46px;top:274px;width:71.54px;color:#000">4455.8</div>
<div class="c" style="left:118.85px;top:274px;width:67.15px;color:#4a86e8">56.5</div>
<div class="c" style="left:164.01px;top:274px;width:53.99px;color:#000">56.0</div>
<div class="c" style="left:196.39px;top:274px;width:49.61px;color:#4a86e8">2</div>
<div class="c" style="left:223.33px;top:274px;width:61.67px;color:#000">59.5</div>
<div class="c" style="left:262.24px;top:274px;width:62.76px;color:#4a86e8">2</div>
<div class="c" style="left:300.40px;top:274px;width:83.60px;color:#000">0.75</div>
<div class="c" style="left:360.95px;top:274px;width:66.05px;color:#000">0.00</div>
<div class="c cl" style="left:428.00px;top:274px;width:73.73px;color:#000">MobiE</div>
<div class="cm" style="left:471px;top:274px"></div>
<div class="c" style="left:451.25px;top:274px;width:96.75px;color:#000">2016-04-27</div>
<div class="c" style="left:524.85px;top:274px;width:67.15px;color:#000">0:17</div>
<div class="c" style="left:568.18px;top:274px;width:74.82px;color:#4a86e8">2.60</div>
<div class="c" style="left:620.33px;top:274px;width:61.67px;color:#4a86e8">11.54</div>
<div class="c" style="left:658.66px;top:274px;width:69.34px;color:#4a86e8">€0.00</div>
<div class="c" style="left:704.66px;top:274px;width:69.34px;color:#4a86e8">€0.00</div>
<div class="c" style="left:750.56px;top:274px;width:70.44px;color:#4a86e8">€0.000</div>
<div class="c" style="left:797.56px;top:274px;width:70.44px;color:#000">€0.00</div>
<div class="c" style="left:888.85px;top:274px;width:67.15px;color:#4a86e8">128.4</div>
<div class="c" style="left:932.75px;top:274px;width:68.25px;color:#4a86e8">284.0</div>
<div class="c" style="left:977.46px;top:274px;width:71.54px;color:#4a86e8">21.43</div>
<div class="c b" style="left:1024.69px;top:274px;width:80.31px;color:#4a86e8">5.3</div>
<div class="c b" style="left:1080.69px;top:274px;width:80.31px;color:#4a86e8">3.7</div>
<div class="c b" style="left:1136.69px;top:274px;width:80.31px;color:#4a86e8">2.6</div>
<div class="rh" style="top:291px;background:#f3f3f3">422</div>
<div class="ab" style="left:0;top:307px;width:41px;height:1px;background:#c9c9c9"></div>
<div class="hl" style="left:42px;top:307px;width:1176px"></div>
<div class="c" style="left:16.98px;top:291px;width:77.02px;color:#4a86e8">46179.3</div>
<div class="c" style="left:70.46px;top:291px;width:71.54px;color:#000">4543.5</div>
<div class="c" style="left:118.85px;top:291px;width:67.15px;color:#4a86e8">87.7</div>
<div class="c" style="left:164.01px;top:291px;width:53.99px;color:#000">1.0</div>
<div class="c b" style="left:196.39px;top:291px;width:49.61px;color:#000">0</div>
<div class="c" style="left:223.33px;top:291px;width:61.67px;color:#000">1.0</div>
<div class="c b" style="left:262.24px;top:291px;width:62.76px;color:#000">100</div>
<div class="c" style="left:300.40px;top:291px;width:83.60px;color:#000">0.00</div>
<div class="c b" style="left:360.95px;top:291px;width:66.05px;color:#000">9.07</div>
<div class="c cl" style="left:428.00px;top:291px;width:73.73px;color:#000">GalpG</div>
<div class="cm" style="left:471px;top:291px"></div>
<div class="c" style="left:451.25px;top:291px;width:96.75px;color:#000">2016-04-27</div>
<div class="c" style="left:658.66px;top:291px;width:69.34px;color:#4a86e8">€0.00</div>
<div class="c" style="left:704.66px;top:291px;width:69.34px;color:#4a86e8">€0.00</div>
<div class="c" style="left:750.56px;top:291px;width:70.44px;color:#4a86e8">€1.474</div>
<div class="c b" style="left:797.56px;top:291px;width:70.44px;color:#000">€13.37</div>
<div class="c" style="left:888.85px;top:291px;width:67.15px;color:#4a86e8">149.9</div>
<div class="c" style="left:932.75px;top:291px;width:68.25px;color:#4a86e8">293.2</div>
<div class="c b" style="left:1024.69px;top:291px;width:80.31px;color:#4a86e8">11.9</div>
<div class="c b" style="left:1080.69px;top:291px;width:80.31px;color:#4a86e8">8.3</div>
<div class="c b" style="left:1136.69px;top:291px;width:80.31px;color:#4a86e8">6.0</div>
<div class="rh" style="top:308px;background:#f3f3f3">423</div>
<div class="ab" style="left:0;top:324px;width:41px;height:1px;background:#c9c9c9"></div>
<div class="hl" style="left:42px;top:324px;width:1176px"></div>
<div class="c" style="left:16.98px;top:308px;width:77.02px;color:#4a86e8">46267.0</div>
<div class="c" style="left:70.46px;top:308px;width:71.54px;color:#000">4568.9</div>
<div class="c" style="left:118.85px;top:308px;width:67.15px;color:#4a86e8">25.4</div>
<div class="c" style="left:164.01px;top:308px;width:53.99px;color:#000">6.5</div>
<div class="c b" style="left:196.39px;top:308px;width:49.61px;color:#000">90</div>
<div class="c" style="left:223.33px;top:308px;width:61.67px;color:#000">100.0</div>
<div class="c" style="left:262.24px;top:308px;width:62.76px;color:#4a86e8">90</div>
<div class="c" style="left:300.40px;top:308px;width:83.60px;color:#000">17.38</div>
<div class="c" style="left:360.95px;top:308px;width:66.05px;color:#000">0.00</div>
<div class="c cl" style="left:428.00px;top:308px;width:73.73px;color:#000">HomeE</div>
<div class="c" style="left:451.25px;top:308px;width:96.75px;color:#000">2016-04-27</div>
<div class="c" style="left:658.66px;top:308px;width:69.34px;color:#4a86e8">€0.11</div>
<div class="c" style="left:704.66px;top:308px;width:69.34px;color:#4a86e8">€1.86</div>
<div class="c" style="left:750.56px;top:308px;width:70.44px;color:#4a86e8">€0.000</div>
<div class="c" style="left:797.56px;top:308px;width:70.44px;color:#000">€0.00</div>
<div class="c" style="left:932.75px;top:308px;width:68.25px;color:#4a86e8">302.4</div>
<div class="c" style="left:977.46px;top:308px;width:71.54px;color:#4a86e8">18.59</div>
<div class="c b" style="left:1024.69px;top:308px;width:80.31px;color:#4a86e8">11.3</div>
<div class="c b" style="left:1080.69px;top:308px;width:80.31px;color:#4a86e8">7.9</div>
<div class="c b" style="left:1136.69px;top:308px;width:80.31px;color:#4a86e8">5.6</div>
<div class="rh" style="top:325px;background:#f3f3f3">424</div>
<div class="ab" style="left:0;top:341px;width:41px;height:1px;background:#c9c9c9"></div>
<div class="hl" style="left:42px;top:341px;width:1176px"></div>
<div class="c" style="left:16.98px;top:325px;width:77.02px;color:#4a86e8">46292.4</div>
<div class="c" style="left:70.46px;top:325px;width:71.54px;color:#000">4633.3</div>
<div class="c" style="left:118.85px;top:325px;width:67.15px;color:#4a86e8">64.4</div>
<div class="c" style="left:164.01px;top:325px;width:53.99px;color:#000">60.5</div>
<div class="c" style="left:196.39px;top:325px;width:49.61px;color:#4a86e8">90</div>
<div class="c" style="left:223.33px;top:325px;width:61.67px;color:#000">100.0</div>
<div class="c" style="left:262.24px;top:325px;width:62.76px;color:#4a86e8">90</div>
<div class="c" style="left:300.40px;top:325px;width:83.60px;color:#000">8.51</div>
<div class="c" style="left:360.95px;top:325px;width:66.05px;color:#000">0.00</div>
<div class="c cl" style="left:428.00px;top:325px;width:73.73px;color:#000">SiHome</div>
<div class="c" style="left:451.25px;top:325px;width:96.75px;color:#000">2016-04-28</div>
<div class="c" style="left:658.66px;top:325px;width:69.34px;color:#4a86e8">€0.20</div>
<div class="c" style="left:704.66px;top:325px;width:69.34px;color:#4a86e8">€1.72</div>
<div class="c" style="left:750.56px;top:325px;width:70.44px;color:#4a86e8">€0.000</div>
<div class="c" style="left:797.56px;top:325px;width:70.44px;color:#000">€0.00</div>
<div class="c" style="left:888.85px;top:325px;width:67.15px;color:#4a86e8">163.0</div>
<div class="c" style="left:932.75px;top:325px;width:68.25px;color:#4a86e8">297.8</div>
<div class="c" style="left:977.46px;top:325px;width:71.54px;color:#4a86e8">21.54</div>
<div class="c b" style="left:1024.69px;top:325px;width:80.31px;color:#4a86e8">4.8</div>
<div class="c b" style="left:1080.69px;top:325px;width:80.31px;color:#4a86e8">3.3</div>
<div class="c b" style="left:1136.69px;top:325px;width:80.31px;color:#4a86e8">2.4</div>
<div class="rh" style="top:342px;background:#f3f3f3">425</div>
<div class="ab" style="left:0;top:358px;width:41px;height:1px;background:#c9c9c9"></div>
<div class="hl" style="left:42px;top:358px;width:1176px"></div>
<div class="c" style="left:16.98px;top:342px;width:77.02px;color:#4a86e8">46356.8</div>
<div class="c" style="left:70.46px;top:342px;width:71.54px;color:#000">4786.2</div>
<div class="c" style="left:118.85px;top:342px;width:67.15px;color:#4a86e8">152.9</div>
<div class="c" style="left:164.01px;top:342px;width:53.99px;color:#000">10.5</div>
<div class="c b" style="left:196.39px;top:342px;width:49.61px;color:#000">80</div>
<div class="c" style="left:223.33px;top:342px;width:61.67px;color:#000">100.0</div>
<div class="c" style="left:262.24px;top:342px;width:62.76px;color:#4a86e8">80</div>
<div class="c" style="left:300.40px;top:342px;width:83.60px;color:#000">16.73</div>
<div class="c" style="left:360.95px;top:342px;width:66.05px;color:#000">0.00</div>
<div class="c cl" style="left:428.00px;top:342px;width:73.73px;color:#000">HomeE</div>
<div class="c" style="left:451.25px;top:342px;width:96.75px;color:#000">2016-04-28</div>
<div class="c" style="left:658.66px;top:342px;width:69.34px;color:#4a86e8">€0.11</div>
<div class="c" style="left:704.66px;top:342px;width:69.34px;color:#4a86e8">€1.79</div>
<div class="c" style="left:750.56px;top:342px;width:70.44px;color:#4a86e8">€0.000</div>
<div class="c" style="left:797.56px;top:342px;width:70.44px;color:#000">€0.00</div>
<div class="c" style="left:888.85px;top:342px;width:67.15px;color:#4a86e8">170.8</div>
<div class="c" style="left:932.75px;top:342px;width:68.25px;color:#4a86e8">305.4</div>
<div class="c" style="left:977.46px;top:342px;width:71.54px;color:#4a86e8">18.69</div>
<div class="c b" style="left:1024.69px;top:342px;width:80.31px;color:#4a86e8">10.8</div>
<div class="c b" style="left:1080.69px;top:342px;width:80.31px;color:#4a86e8">7.5</div>
<div class="c b" style="left:1136.69px;top:342px;width:80.31px;color:#4a86e8">5.4</div>
<div class="rh" style="top:359px;background:#f3f3f3">426</div>
<div class="ab" style="left:0;top:375px;width:41px;height:1px;background:#c9c9c9"></div>
<div class="hl" style="left:42px;top:375px;width:1176px"></div>
<div class="c" style="left:16.98px;top:359px;width:77.02px;color:#4a86e8">46509.7</div>
<div class="c" style="left:70.46px;top:359px;width:71.54px;color:#000">4850.7</div>
<div class="c" style="left:118.85px;top:359px;width:67.15px;color:#4a86e8">64.5</div>
<div class="c" style="left:164.01px;top:359px;width:53.99px;color:#000">58.0</div>
<div class="c" style="left:196.39px;top:359px;width:49.61px;color:#4a86e8">80</div>
<div class="c" style="left:223.33px;top:359px;width:61.67px;color:#000">99.5</div>
<div class="c" style="left:262.24px;top:359px;width:62.76px;color:#4a86e8">80</div>
<div class="c" style="left:300.40px;top:359px;width:83.60px;color:#000">8.78</div>
<div class="c" style="left:360.95px;top:359px;width:66.05px;color:#000">0.00</div>
<div class="c cl" style="left:428.00px;top:359px;width:73.73px;color:#000">SiHome</div>
<div class="c" style="left:451.25px;top:359px;width:96.75px;color:#000">2016-04-29</div>
<div class="c" style="left:524.85px;top:359px;width:67.15px;color:#000">3:58</div>
<div class="c" style="left:568.18px;top:359px;width:74.82px;color:#4a86e8">2.21</div>
<div class="c" style="left:620.33px;top:359px;width:61.67px;color:#4a86e8">9.84</div>
<div class="c" style="left:658.66px;top:359px;width:69.34px;color:#4a86e8">€0.20</div>
<div class="c" style="left:704.66px;top:359px;width:69.34px;color:#4a86e8">€1.77</div>
<div class="c" style="left:750.56px;top:359px;width:70.44px;color:#4a86e8">€0.000</div>
<div class="c" style="left:797.56px;top:359px;width:70.44px;color:#000">€0.00</div>
<div class="c" style="left:888.85px;top:359px;width:67.15px;color:#4a86e8">153.6</div>
<div class="c" style="left:932.75px;top:359px;width:68.25px;color:#4a86e8">294.7</div>
<div class="c" style="left:977.46px;top:359px;width:71.54px;color:#4a86e8">21.16</div>
<div class="c b" style="left:1024.69px;top:359px;width:80.31px;color:#4a86e8">5.1</div>
<div class="c b" style="left:1080.69px;top:359px;width:80.31px;color:#4a86e8">3.5</div>
<div class="c b" style="left:1136.69px;top:359px;width:80.31px;color:#4a86e8">2.5</div>
<div class="rh" style="top:376px;background:#f3f3f3">427</div>
<div class="ab" style="left:0;top:392px;width:41px;height:1px;background:#c9c9c9"></div>
<div class="hl" style="left:42px;top:392px;width:1176px"></div>
<div class="c" style="left:16.98px;top:376px;width:77.02px;color:#4a86e8">46574.2</div>
<div class="c" style="left:70.46px;top:376px;width:71.54px;color:#000">4885.0</div>
<div class="c" style="left:118.85px;top:376px;width:67.15px;color:#4a86e8">34.3</div>
<div class="c" style="left:164.01px;top:376px;width:53.99px;color:#000">68.0</div>
<div class="c" style="left:196.39px;top:376px;width:49.61px;color:#4a86e8">80</div>
<div class="c" style="left:223.33px;top:376px;width:61.67px;color:#000">100.0</div>
<div class="c" style="left:262.24px;top:376px;width:62.76px;color:#4a86e8">80</div>
<div class="c" style="left:300.40px;top:376px;width:83.60px;color:#000">7.24</div>
<div class="c" style="left:360.95px;top:376px;width:66.05px;color:#000">0.00</div>
<div class="c cl" style="left:428.00px;top:376px;width:73.73px;color:#000">MobiE</div>
<div class="cm" style="left:471px;top:376px"></div>
<div class="c" style="left:451.25px;top:376px;width:96.75px;color:#000">2016-04-29</div>
<div class="c" style="left:524.85px;top:376px;width:67.15px;color:#000">2:35</div>
<div class="c" style="left:568.18px;top:376px;width:74.82px;color:#4a86e8">2.79</div>
<div class="c" style="left:620.33px;top:376px;width:61.67px;color:#4a86e8">12.40</div>
<div class="c" style="left:658.66px;top:376px;width:69.34px;color:#4a86e8">€0.00</div>
<div class="c" style="left:704.66px;top:376px;width:69.34px;color:#4a86e8">€0.00</div>
<div class="c" style="left:750.56px;top:376px;width:70.44px;color:#4a86e8">€0.000</div>
<div class="c" style="left:797.56px;top:376px;width:70.44px;color:#000">€0.00</div>
<div class="c" style="left:888.85px;top:376px;width:67.15px;color:#4a86e8">108.9</div>
<div class="c" style="left:932.75px;top:376px;width:68.25px;color:#4a86e8">278.2</div>
<div class="c" style="left:977.46px;top:376px;width:71.54px;color:#4a86e8">22.63</div>
<div class="c b" style="left:1024.69px;top:376px;width:80.31px;color:#4a86e8">3.9</div>
<div class="c b" style="left:1080.69px;top:376px;width:80.31px;color:#4a86e8">2.7</div>
<div class="c b" style="left:1136.69px;top:376px;width:80.31px;color:#4a86e8">1.9</div>
<div class="rh" style="top:393px;background:#f3f3f3">428</div>
<div class="ab" style="left:0;top:409px;width:41px;height:1px;background:#c9c9c9"></div>
<div class="hl" style="left:42px;top:409px;width:1176px"></div>
<div class="c" style="left:16.98px;top:393px;width:77.02px;color:#4a86e8">46608.5</div>
<div class="c" style="left:70.46px;top:393px;width:71.54px;color:#000">4920.3</div>
<div class="c" style="left:118.85px;top:393px;width:67.15px;color:#4a86e8">35.3</div>
<div class="c" style="left:164.01px;top:393px;width:53.99px;color:#000">78.0</div>
<div class="c" style="left:196.39px;top:393px;width:49.61px;color:#4a86e8">80</div>
<div class="c" style="left:223.33px;top:393px;width:61.67px;color:#000">100.0</div>
<div class="c" style="left:262.24px;top:393px;width:62.76px;color:#4a86e8">80</div>
<div class="c" style="left:300.40px;top:393px;width:83.60px;color:#000">5.01</div>
<div class="c" style="left:360.95px;top:393px;width:66.05px;color:#000">0.00</div>
<div class="c cl" style="left:428.00px;top:393px;width:73.73px;color:#000">HomeE</div>
<div class="c" style="left:451.25px;top:393px;width:96.75px;color:#000">2016-04-29</div>
<div class="c" style="left:658.66px;top:393px;width:69.34px;color:#4a86e8">€0.11</div>
<div class="c" style="left:704.66px;top:393px;width:69.34px;color:#4a86e8">€0.54</div>
<div class="c" style="left:750.56px;top:393px;width:70.44px;color:#4a86e8">€0.000</div>
<div class="c" style="left:797.56px;top:393px;width:70.44px;color:#000">€0.00</div>
<div class="c" style="left:888.85px;top:393px;width:67.15px;color:#4a86e8">160.5</div>
<div class="c" style="left:932.75px;top:393px;width:68.25px;color:#4a86e8">291.7</div>
<div class="c" style="left:977.46px;top:393px;width:71.54px;color:#4a86e8">22.77</div>
<div class="c b" style="left:1024.69px;top:393px;width:80.31px;color:#4a86e8">2.6</div>
<div class="c b" style="left:1080.69px;top:393px;width:80.31px;color:#4a86e8">1.9</div>
<div class="c b" style="left:1136.69px;top:393px;width:80.31px;color:#4a86e8">1.3</div>
<div class="rh" style="top:410px;background:#f3f3f3">429</div>
<div class="ab" style="left:0;top:426px;width:41px;height:1px;background:#c9c9c9"></div>
<div class="hl" style="left:42px;top:426px;width:1176px"></div>
<div class="c" style="left:16.98px;top:410px;width:77.02px;color:#4a86e8">46643.8</div>
<div class="c" style="left:70.46px;top:410px;width:71.54px;color:#000">5016.7</div>
<div class="c" style="left:118.85px;top:410px;width:67.15px;color:#4a86e8">96.4</div>
<div class="c" style="left:164.01px;top:410px;width:53.99px;color:#000">31.5</div>
<div class="c" style="left:196.39px;top:410px;width:49.61px;color:#4a86e8">80</div>
<div class="c" style="left:223.33px;top:410px;width:61.67px;color:#000">100.0</div>
<div class="c" style="left:262.24px;top:410px;width:62.76px;color:#4a86e8">80</div>
<div class="c" style="left:300.40px;top:410px;width:83.60px;color:#000">13.57</div>
<div class="c" style="left:360.95px;top:410px;width:66.05px;color:#000">0.00</div>
<div class="c cl" style="left:428.00px;top:410px;width:73.73px;color:#000">HomeE</div>
<div class="c" style="left:451.25px;top:410px;width:96.75px;color:#000">2016-05-01</div>
<div class="c" style="left:658.66px;top:410px;width:69.34px;color:#4a86e8">€0.11</div>
<div class="c" style="left:704.66px;top:410px;width:69.34px;color:#4a86e8">€1.45</div>
<div class="c" style="left:750.56px;top:410px;width:70.44px;color:#4a86e8">€0.000</div>
<div class="c" style="left:797.56px;top:410px;width:70.44px;color:#000">€0.00</div>
<div class="c" style="left:888.85px;top:410px;width:67.15px;color:#4a86e8">140.7</div>
<div class="c" style="left:932.75px;top:410px;width:68.25px;color:#4a86e8">291.9</div>
<div class="c" style="left:977.46px;top:410px;width:71.54px;color:#4a86e8">19.81</div>
<div class="c b" style="left:1024.69px;top:410px;width:80.31px;color:#4a86e8">8.2</div>
<div class="c b" style="left:1080.69px;top:410px;width:80.31px;color:#4a86e8">5.8</div>
<div class="c b" style="left:1136.69px;top:410px;width:80.31px;color:#4a86e8">4.1</div>
<div class="rh" style="top:427px;background:#f3f3f3">430</div>
<div class="ab" style="left:0;top:443px;width:41px;height:1px;background:#c9c9c9"></div>
<div class="hl" style="left:42px;top:443px;width:1176px"></div>
<div class="c" style="left:16.98px;top:427px;width:77.02px;color:#4a86e8">46740.2</div>
<div class="c" style="left:70.46px;top:427px;width:71.54px;color:#000">5104.9</div>
<div class="c" style="left:118.85px;top:427px;width:67.15px;color:#4a86e8">88.2</div>
<div class="c" style="left:164.01px;top:427px;width:53.99px;color:#000">30.0</div>
<div class="c" style="left:196.39px;top:427px;width:49.61px;color:#4a86e8">80</div>
<div class="c" style="left:223.33px;top:427px;width:61.67px;color:#000">100.0</div>
<div class="c" style="left:262.24px;top:427px;width:62.76px;color:#4a86e8">80</div>
<div class="c" style="left:300.40px;top:427px;width:83.60px;color:#000">14.13</div>
<div class="c" style="left:360.95px;top:427px;width:66.05px;color:#000">0.00</div>
<div class="c cl" style="left:428.00px;top:427px;width:73.73px;color:#000">HomeE</div>
<div class="c" style="left:451.25px;top:427px;width:96.75px;color:#000">2016-05-03</div>
<div class="c" style="left:658.66px;top:427px;width:69.34px;color:#4a86e8">€0.11</div>
<div class="c" style="left:704.66px;top:427px;width:69.34px;color:#4a86e8">€1.51</div>
<div class="c" style="left:750.56px;top:427px;width:70.44px;color:#4a86e8">€0.000</div>
<div class="c" style="left:797.56px;top:427px;width:70.44px;color:#000">€0.00</div>
<div class="c" style="left:888.85px;top:427px;width:67.15px;color:#4a86e8">126.0</div>
<div class="c" style="left:932.75px;top:427px;width:68.25px;color:#4a86e8">281.7</div>
<div class="c" style="left:977.46px;top:427px;width:71.54px;color:#4a86e8">20.19</div>
<div class="c b" style="left:1024.69px;top:427px;width:80.31px;color:#4a86e8">8.4</div>
<div class="c b" style="left:1080.69px;top:427px;width:80.31px;color:#4a86e8">5.9</div>
<div class="c b" style="left:1136.69px;top:427px;width:80.31px;color:#4a86e8">4.2</div>
<div class="rh" style="top:444px;background:#f3f3f3">431</div>
<div class="ab" style="left:0;top:460px;width:41px;height:1px;background:#c9c9c9"></div>
<div class="hl" style="left:42px;top:460px;width:1176px"></div>
<div class="c" style="left:16.98px;top:444px;width:77.02px;color:#4a86e8">46828.4</div>
<div class="c" style="left:70.46px;top:444px;width:71.54px;color:#000">5144.2</div>
<div class="c" style="left:118.85px;top:444px;width:67.15px;color:#4a86e8">39.3</div>
<div class="c" style="left:164.01px;top:444px;width:53.99px;color:#000">74.5</div>
<div class="c" style="left:196.39px;top:444px;width:49.61px;color:#4a86e8">80</div>
<div class="c" style="left:223.33px;top:444px;width:61.67px;color:#000">100.0</div>
<div class="c" style="left:262.24px;top:444px;width:62.76px;color:#4a86e8">80</div>
<div class="c" style="left:300.40px;top:444px;width:83.60px;color:#000">5.76</div>
<div class="c" style="left:360.95px;top:444px;width:66.05px;color:#000">0.00</div>
<div class="c cl" style="left:428.00px;top:444px;width:73.73px;color:#000">Work</div>
<div class="c" style="left:451.25px;top:444px;width:96.75px;color:#000">2016-05-04</div>
<div class="c" style="left:658.66px;top:444px;width:69.34px;color:#4a86e8">€0.00</div>
<div class="c" style="left:704.66px;top:444px;width:69.34px;color:#4a86e8">€0.00</div>
<div class="c" style="left:750.56px;top:444px;width:70.44px;color:#4a86e8">€0.000</div>
<div class="c" style="left:797.56px;top:444px;width:70.44px;color:#000">€0.00</div>
<div class="c" style="left:888.85px;top:444px;width:67.15px;color:#4a86e8">154.1</div>
<div class="c" style="left:932.75px;top:444px;width:68.25px;color:#4a86e8">291.1</div>
<div class="c" style="left:977.46px;top:444px;width:71.54px;color:#4a86e8">22.59</div>
<div class="c b" style="left:1024.69px;top:444px;width:80.31px;color:#4a86e8">3.1</div>
<div class="c b" style="left:1080.69px;top:444px;width:80.31px;color:#4a86e8">2.1</div>
<div class="c b" style="left:1136.69px;top:444px;width:80.31px;color:#4a86e8">1.5</div>
<div class="rh" style="top:461px;background:#f3f3f3">432</div>
<div class="ab" style="left:0;top:477px;width:41px;height:1px;background:#c9c9c9"></div>
<div class="hl" style="left:42px;top:477px;width:1176px"></div>
<div class="c" style="left:16.98px;top:461px;width:77.02px;color:#4a86e8">46867.7</div>
<div class="c" style="left:70.46px;top:461px;width:71.54px;color:#000">5242.2</div>
<div class="c" style="left:118.85px;top:461px;width:67.15px;color:#4a86e8">98.0</div>
<div class="c" style="left:164.01px;top:461px;width:53.99px;color:#000">25.5</div>
<div class="c" style="left:196.39px;top:461px;width:49.61px;color:#4a86e8">80</div>
<div class="c" style="left:223.33px;top:461px;width:61.67px;color:#000">70.5</div>
<div class="c" style="left:262.24px;top:461px;width:62.76px;color:#4a86e8">80</div>
<div class="c" style="left:300.40px;top:461px;width:83.60px;color:#000">8.87</div>
<div class="c" style="left:360.95px;top:461px;width:66.05px;color:#000">0.00</div>
<div class="c cl" style="left:428.00px;top:461px;width:73.73px;color:#000">Work</div>
<div class="c" style="left:451.25px;top:461px;width:96.75px;color:#000">2016-05-05</div>
<div class="c" style="left:524.85px;top:461px;width:67.15px;color:#000">3:55</div>
<div class="c" style="left:568.18px;top:461px;width:74.82px;color:#4a86e8">2.26</div>
<div class="c" style="left:620.33px;top:461px;width:61.67px;color:#4a86e8">10.07</div>
<div class="c" style="left:658.66px;top:461px;width:69.34px;color:#4a86e8">€0.00</div>
<div class="c" style="left:704.66px;top:461px;width:69.34px;color:#4a86e8">€0.00</div>
<div class="c" style="left:750.56px;top:461px;width:70.44px;color:#4a86e8">€0.000</div>
<div class="c" style="left:797.56px;top:461px;width:70.44px;color:#000">€0.00</div>
<div class="c" style="left:888.85px;top:461px;width:67.15px;color:#4a86e8">131.5</div>
<div class="c" style="left:932.75px;top:461px;width:68.25px;color:#4a86e8">285.6</div>
<div class="c" style="left:977.46px;top:461px;width:71.54px;color:#4a86e8">19.71</div>
<div class="c b" style="left:1024.69px;top:461px;width:80.31px;color:#4a86e8">9.0</div>
<div class="c b" style="left:1080.69px;top:461px;width:80.31px;color:#4a86e8">6.3</div>
<div class="c b" style="left:1136.69px;top:461px;width:80.31px;color:#4a86e8">4.5</div>
<div class="rh" style="top:478px;background:#f3f3f3">433</div>
<div class="ab" style="left:0;top:494px;width:41px;height:1px;background:#c9c9c9"></div>
<div class="hl" style="left:42px;top:494px;width:1176px"></div>
<div class="c" style="left:16.98px;top:478px;width:77.02px;color:#4a86e8">46965.7</div>
<div class="c" style="left:70.46px;top:478px;width:71.54px;color:#000">5279.7</div>
<div class="c" style="left:118.85px;top:478px;width:67.15px;color:#4a86e8">37.5</div>
<div class="c" style="left:164.01px;top:478px;width:53.99px;color:#000">41.5</div>
<div class="c" style="left:196.39px;top:478px;width:49.61px;color:#4a86e8">80</div>
<div class="c" style="left:223.33px;top:478px;width:61.67px;color:#000">63.0</div>
<div class="c" style="left:262.24px;top:478px;width:62.76px;color:#4a86e8">80</div>
<div class="c" style="left:300.40px;top:478px;width:83.60px;color:#000">4.46</div>
<div class="c" style="left:360.95px;top:478px;width:66.05px;color:#000">0.00</div>
<div class="c cl" style="left:428.00px;top:478px;width:73.73px;color:#000">Work</div>
<div class="c" style="left:451.25px;top:478px;width:96.75px;color:#000">2016-05-05</div>
<div class="c" style="left:524.85px;top:478px;width:67.15px;color:#000">1:56</div>
<div class="c" style="left:568.18px;top:478px;width:74.82px;color:#4a86e8">2.31</div>
<div class="c" style="left:620.33px;top:478px;width:61.67px;color:#4a86e8">10.25</div>
<div class="c" style="left:658.66px;top:478px;width:69.34px;color:#4a86e8">€0.00</div>
<div class="c" style="left:704.66px;top:478px;width:69.34px;color:#4a86e8">€0.00</div>
<div class="c" style="left:750.56px;top:478px;width:70.44px;color:#4a86e8">€0.000</div>
<div class="c" style="left:797.56px;top:478px;width:70.44px;color:#000">€0.00</div>
<div class="c" style="left:888.85px;top:478px;width:67.15px;color:#4a86e8">129.3</div>
<div class="c" style="left:932.75px;top:478px;width:68.25px;color:#4a86e8">284.7</div>
<div class="c" style="left:977.46px;top:478px;width:71.54px;color:#4a86e8">20.74</div>
<div class="c b" style="left:1024.69px;top:478px;width:80.31px;color:#4a86e8">7.0</div>
<div class="c b" style="left:1080.69px;top:478px;width:80.31px;color:#4a86e8">4.9</div>
<div class="c b" style="left:1136.69px;top:478px;width:80.31px;color:#4a86e8">3.5</div>
<div class="rh" style="top:495px;background:#f3f3f3">434</div>
<div class="ab" style="left:0;top:511px;width:41px;height:1px;background:#c9c9c9"></div>
<div class="hl" style="left:42px;top:511px;width:1176px"></div>
<div class="c" style="left:16.98px;top:495px;width:77.02px;color:#4a86e8">47003.2</div>
<div class="c" style="left:70.46px;top:495px;width:71.54px;color:#000">5337.6</div>
<div class="c" style="left:118.85px;top:495px;width:67.15px;color:#4a86e8">57.9</div>
<div class="c" style="left:164.01px;top:495px;width:53.99px;color:#000">12.5</div>
<div class="c" style="left:196.39px;top:495px;width:49.61px;color:#4a86e8">80</div>
<div class="c" style="left:223.33px;top:495px;width:61.67px;color:#000">100.0</div>
<div class="c" style="left:262.24px;top:495px;width:62.76px;color:#4a86e8">80</div>
<div class="c" style="left:300.40px;top:495px;width:83.60px;color:#000">16.26</div>
<div class="c" style="left:360.95px;top:495px;width:66.05px;color:#000">0.00</div>
<div class="c cl" style="left:428.00px;top:495px;width:73.73px;color:#000">HomeE</div>
<div class="c" style="left:451.25px;top:495px;width:96.75px;color:#000">2016-05-05</div>
<div class="c" style="left:658.66px;top:495px;width:69.34px;color:#4a86e8">€0.11</div>
<div class="c" style="left:704.66px;top:495px;width:69.34px;color:#4a86e8">€1.74</div>
<div class="c" style="left:750.56px;top:495px;width:70.44px;color:#4a86e8">€0.000</div>
<div class="c" style="left:797.56px;top:495px;width:70.44px;color:#000">€0.00</div>
<div class="c" style="left:888.85px;top:495px;width:67.15px;color:#4a86e8">114.7</div>
<div class="c" style="left:932.75px;top:495px;width:68.25px;color:#4a86e8">276.9</div>
<div class="c" style="left:977.46px;top:495px;width:71.54px;color:#4a86e8">18.58</div>
<div class="c b" style="left:1024.69px;top:495px;width:80.31px;color:#4a86e8">10.5</div>
<div class="c b" style="left:1080.69px;top:495px;width:80.31px;color:#4a86e8">7.4</div>
<div class="c b" style="left:1136.69px;top:495px;width:80.31px;color:#4a86e8">5.3</div>
<div class="rh" style="top:512px;background:#f3f3f3">435</div>
<div class="ab" style="left:0;top:528px;width:41px;height:1px;background:#c9c9c9"></div>
<div class="hl" style="left:42px;top:528px;width:1176px"></div>
<div class="c" style="left:16.98px;top:512px;width:77.02px;color:#4a86e8">47061.1</div>
<div class="c" style="left:70.46px;top:512px;width:71.54px;color:#000">5379.0</div>
<div class="c" style="left:118.85px;top:512px;width:67.15px;color:#4a86e8">41.4</div>
<div class="c" style="left:164.01px;top:512px;width:53.99px;color:#000">69.0</div>
<div class="c" style="left:196.39px;top:512px;width:49.61px;color:#4a86e8">80</div>
<div class="c" style="left:223.33px;top:512px;width:61.67px;color:#000">100.0</div>
<div class="c" style="left:262.24px;top:512px;width:62.76px;color:#4a86e8">80</div>
<div class="c" style="left:300.40px;top:512px;width:83.60px;color:#000">6.61</div>
<div class="c" style="left:360.95px;top:512px;width:66.05px;color:#000">0.00</div>
<div class="c cl" style="left:428.00px;top:512px;width:73.73px;color:#000">Work</div>
<div class="c" style="left:451.25px;top:512px;width:96.75px;color:#000">2016-05-06</div>
<div class="c" style="left:658.66px;top:512px;width:69.34px;color:#4a86e8">€0.00</div>
<div class="c" style="left:704.66px;top:512px;width:69.34px;color:#4a86e8">€0.00</div>
<div class="c" style="left:750.56px;top:512px;width:70.44px;color:#4a86e8">€0.000</div>
<div class="c" style="left:797.56px;top:512px;width:70.44px;color:#000">€0.00</div>
<div class="c" style="left:888.85px;top:512px;width:67.15px;color:#4a86e8">133.5</div>
<div class="c" style="left:932.75px;top:512px;width:68.25px;color:#4a86e8">286.0</div>
<div class="c" style="left:977.46px;top:512px;width:71.54px;color:#4a86e8">21.32</div>
<div class="c b" style="left:1024.69px;top:512px;width:80.31px;color:#4a86e8">3.7</div>
<div class="c b" style="left:1080.69px;top:512px;width:80.31px;color:#4a86e8">2.6</div>
<div class="c b" style="left:1136.69px;top:512px;width:80.31px;color:#4a86e8">1.9</div>
<div class="rh" style="top:529px;background:#f3f3f3">436</div>
<div class="ab" style="left:0;top:545px;width:41px;height:1px;background:#c9c9c9"></div>
<div class="hl" style="left:42px;top:545px;width:1176px"></div>
<div class="c" style="left:16.98px;top:529px;width:77.02px;color:#4a86e8">47102.5</div>
<div class="c" style="left:70.46px;top:529px;width:71.54px;color:#000">5453.0</div>
<div class="c" style="left:118.85px;top:529px;width:67.15px;color:#4a86e8">74.0</div>
<div class="c" style="left:164.01px;top:529px;width:53.99px;color:#000">34.5</div>
<div class="c" style="left:196.39px;top:529px;width:49.61px;color:#4a86e8">80</div>
<div class="c" style="left:223.33px;top:529px;width:61.67px;color:#000">91.0</div>
<div class="c" style="left:262.24px;top:529px;width:62.76px;color:#4a86e8">80</div>
<div class="c" style="left:300.40px;top:529px;width:83.60px;color:#000">11.71</div>
<div class="c" style="left:360.95px;top:529px;width:66.05px;color:#000">0.00</div>
<div class="c cl" style="left:428.00px;top:529px;width:73.73px;color:#000">SiHome</div>
<div class="c" style="left:451.25px;top:529px;width:96.75px;color:#000">2016-05-07</div>
<div class="c" style="left:524.85px;top:529px;width:67.15px;color:#000">5:12</div>
<div class="c" style="left:568.18px;top:529px;width:74.82px;color:#4a86e8">2.25</div>
<div class="c" style="left:620.33px;top:529px;width:61.67px;color:#4a86e8">10.01</div>
<div class="c" style="left:658.66px;top:529px;width:69.34px;color:#4a86e8">€0.20</div>
<div class="c" style="left:704.66px;top:529px;width:69.34px;color:#4a86e8">€2.36</div>
<div class="c" style="left:750.56px;top:529px;width:70.44px;color:#4a86e8">€0.000</div>
<div class="c" style="left:797.56px;top:529px;width:70.44px;color:#000">€0.00</div>
<div class="c" style="left:888.85px;top:529px;width:67.15px;color:#4a86e8">113.0</div>
<div class="c" style="left:932.75px;top:529px;width:68.25px;color:#4a86e8">273.4</div>
<div class="c" style="left:977.46px;top:529px;width:71.54px;color:#4a86e8">20.73</div>
<div class="c b" style="left:1024.69px;top:529px;width:80.31px;color:#4a86e8">7.9</div>
<div class="c b" style="left:1080.69px;top:529px;width:80.31px;color:#4a86e8">5.5</div>
<div class="c b" style="left:1136.69px;top:529px;width:80.31px;color:#4a86e8">3.9</div>
<div class="rh" style="top:546px;background:#f3f3f3">437</div>
<div class="ab" style="left:0;top:562px;width:41px;height:1px;background:#c9c9c9"></div>
<div class="hl" style="left:42px;top:562px;width:1176px"></div>
<div class="c" style="left:16.98px;top:546px;width:77.02px;color:#4a86e8">47176.5</div>
<div class="c" style="left:70.46px;top:546px;width:71.54px;color:#000">5557.6</div>
<div class="c" style="left:118.85px;top:546px;width:67.15px;color:#4a86e8">104.6</div>
<div class="c" style="left:164.01px;top:546px;width:53.99px;color:#000">9.5</div>
<div class="c" style="left:196.39px;top:546px;width:49.61px;color:#4a86e8">80</div>
<div class="c" style="left:223.33px;top:546px;width:61.67px;color:#000">100.0</div>
<div class="c" style="left:262.24px;top:546px;width:62.76px;color:#4a86e8">80</div>
<div class="c" style="left:300.40px;top:546px;width:83.60px;color:#000">17.55</div>
<div class="c" style="left:360.95px;top:546px;width:66.05px;color:#000">0.00</div>
<div class="c cl" style="left:428.00px;top:546px;width:73.73px;color:#000">HomeE</div>
<div class="c" style="left:451.25px;top:546px;width:96.75px;color:#000">2016-05-08</div>
<div class="c" style="left:658.66px;top:546px;width:69.34px;color:#4a86e8">€0.11</div>
<div class="c" style="left:704.66px;top:546px;width:69.34px;color:#4a86e8">€1.88</div>
<div class="c" style="left:750.56px;top:546px;width:70.44px;color:#4a86e8">€0.000</div>
<div class="c" style="left:797.56px;top:546px;width:70.44px;color:#000">€0.00</div>
<div class="c" style="left:888.85px;top:546px;width:67.15px;color:#4a86e8">128.3</div>
<div class="c" style="left:932.75px;top:546px;width:68.25px;color:#4a86e8">283.0</div>
<div class="c" style="left:977.46px;top:546px;width:71.54px;color:#4a86e8">19.39</div>
<div class="c b" style="left:1024.69px;top:546px;width:80.31px;color:#4a86e8">10.9</div>
<div class="c b" style="left:1080.69px;top:546px;width:80.31px;color:#4a86e8">7.6</div>
<div class="c b" style="left:1136.69px;top:546px;width:80.31px;color:#4a86e8">5.4</div>
<div class="rh" style="top:563px;background:#f3f3f3">438</div>
<div class="ab" style="left:0;top:579px;width:41px;height:1px;background:#c9c9c9"></div>
<div class="hl" style="left:42px;top:579px;width:1176px"></div>
<div class="c" style="left:16.98px;top:563px;width:77.02px;color:#4a86e8">47281.1</div>
<div class="c" style="left:70.46px;top:563px;width:71.54px;color:#000">5634.6</div>
<div class="c" style="left:118.85px;top:563px;width:67.15px;color:#4a86e8">77.0</div>
<div class="c" style="left:164.01px;top:563px;width:53.99px;color:#000">30.0</div>
<div class="c" style="left:196.39px;top:563px;width:49.61px;color:#4a86e8">80</div>
<div class="c" style="left:223.33px;top:563px;width:61.67px;color:#000">100.0</div>
<div class="c" style="left:262.24px;top:563px;width:62.76px;color:#4a86e8">80</div>
<div class="c" style="left:300.40px;top:563px;width:83.60px;color:#000">14.46</div>
<div class="c" style="left:360.95px;top:563px;width:66.05px;color:#000">0.00</div>
<div class="c cl" style="left:428.00px;top:563px;width:73.73px;color:#000">Work</div>
<div class="c" style="left:451.25px;top:563px;width:96.75px;color:#000">2016-05-09</div>
<div class="c" style="left:658.66px;top:563px;width:69.34px;color:#4a86e8">€0.00</div>
<div class="c" style="left:704.66px;top:563px;width:69.34px;color:#4a86e8">€0.00</div>
<div class="c" style="left:750.56px;top:563px;width:70.44px;color:#4a86e8">€0.000</div>
<div class="c" style="left:797.56px;top:563px;width:70.44px;color:#000">€0.00</div>
<div class="c" style="left:888.85px;top:563px;width:67.15px;color:#4a86e8">110.0</div>
<div class="c" style="left:932.75px;top:563px;width:68.25px;color:#4a86e8">270.5</div>
<div class="c" style="left:977.46px;top:563px;width:71.54px;color:#4a86e8">20.66</div>
<div class="c b" style="left:1024.69px;top:563px;width:80.31px;color:#4a86e8">8.4</div>
<div class="c b" style="left:1080.69px;top:563px;width:80.31px;color:#4a86e8">5.9</div>
<div class="c b" style="left:1136.69px;top:563px;width:80.31px;color:#4a86e8">4.2</div>
<div class="rh" style="top:580px;background:#f3f3f3">439</div>
<div class="ab" style="left:0;top:596px;width:41px;height:1px;background:#c9c9c9"></div>
<div class="hl" style="left:42px;top:596px;width:1176px"></div>
<div class="c" style="left:16.98px;top:580px;width:77.02px;color:#4a86e8">47358.1</div>
<div class="c" style="left:70.46px;top:580px;width:71.54px;color:#000">5691.2</div>
<div class="c" style="left:118.85px;top:580px;width:67.15px;color:#4a86e8">56.6</div>
<div class="c" style="left:164.01px;top:580px;width:53.99px;color:#000">50.5</div>
<div class="c" style="left:196.39px;top:580px;width:49.61px;color:#4a86e8">80</div>
<div class="c" style="left:223.33px;top:580px;width:61.67px;color:#000">100.0</div>
<div class="c" style="left:262.24px;top:580px;width:62.76px;color:#4a86e8">80</div>
<div class="c" style="left:300.40px;top:580px;width:83.60px;color:#000">10.49</div>
<div class="c" style="left:360.95px;top:580px;width:66.05px;color:#000">0.00</div>
<div class="c cl" style="left:428.00px;top:580px;width:73.73px;color:#000">HomeE</div>
<div class="c" style="left:451.25px;top:580px;width:96.75px;color:#000">2016-05-09</div>
<div class="c" style="left:658.66px;top:580px;width:69.34px;color:#4a86e8">€0.11</div>
<div class="c" style="left:704.66px;top:580px;width:69.34px;color:#4a86e8">€1.12</div>
<div class="c" style="left:750.56px;top:580px;width:70.44px;color:#4a86e8">€0.000</div>
<div class="c" style="left:797.56px;top:580px;width:70.44px;color:#000">€0.00</div>
<div class="c" style="left:888.85px;top:580px;width:67.15px;color:#4a86e8">114.3</div>
<div class="c" style="left:932.75px;top:580px;width:68.25px;color:#4a86e8">276.9</div>
<div class="c" style="left:977.46px;top:580px;width:71.54px;color:#4a86e8">21.19</div>
<div class="c b" style="left:1024.69px;top:580px;width:80.31px;color:#4a86e8">6.0</div>
<div class="c b" style="left:1080.69px;top:580px;width:80.31px;color:#4a86e8">4.2</div>
<div class="c b" style="left:1136.69px;top:580px;width:80.31px;color:#4a86e8">3.0</div>
<div class="rh" style="top:597px;background:#f3f3f3">440</div>
<div class="ab" style="left:0;top:613px;width:41px;height:1px;background:#c9c9c9"></div>
<div class="hl" style="left:42px;top:613px;width:1176px"></div>
<div class="c" style="left:16.98px;top:597px;width:77.02px;color:#4a86e8">47414.7</div>
<div class="c" style="left:70.46px;top:597px;width:71.54px;color:#000">5759.1</div>
<div class="c" style="left:118.85px;top:597px;width:67.15px;color:#4a86e8">67.9</div>
<div class="c" style="left:164.01px;top:597px;width:53.99px;color:#000">41.5</div>
<div class="c" style="left:196.39px;top:597px;width:49.61px;color:#4a86e8">80</div>
<div class="c" style="left:223.33px;top:597px;width:61.67px;color:#ff0000">75.0</div>
<div class="c" style="left:262.24px;top:597px;width:62.76px;color:#4a86e8">80</div>
<div class="c" style="left:300.40px;top:597px;width:83.60px;color:#000">6.91</div>
<div class="c" style="left:360.95px;top:597px;width:66.05px;color:#000">0.00</div>
<div class="c cl" style="left:428.00px;top:597px;width:73.73px;color:#000">Work</div>
<div class="c" style="left:451.25px;top:597px;width:96.75px;color:#000">2016-05-10</div>
<div class="c" style="left:524.85px;top:597px;width:67.15px;color:#000">3:00</div>
<div class="c" style="left:568.18px;top:597px;width:74.82px;color:#4a86e8">2.30</div>
<div class="c" style="left:620.33px;top:597px;width:61.67px;color:#4a86e8">10.24</div>
<div class="c" style="left:658.66px;top:597px;width:69.34px;color:#4a86e8">€0.00</div>
<div class="c" style="left:704.66px;top:597px;width:69.34px;color:#4a86e8">€0.00</div>
<div class="c" style="left:750.56px;top:597px;width:70.44px;color:#4a86e8">€0.000</div>
<div class="c" style="left:797.56px;top:597px;width:70.44px;color:#000">€0.00</div>
<div class="c" style="left:888.85px;top:597px;width:67.15px;color:#4a86e8">116.1</div>
<div class="c" style="left:932.75px;top:597px;width:68.25px;color:#4a86e8">276.5</div>
<div class="c" style="left:977.46px;top:597px;width:71.54px;color:#4a86e8">20.63</div>
<div class="c b" style="left:1024.69px;top:597px;width:80.31px;color:#4a86e8">7.0</div>
<div class="c b" style="left:1080.69px;top:597px;width:80.31px;color:#4a86e8">4.9</div>
<div class="c b" style="left:1136.69px;top:597px;width:80.31px;color:#4a86e8">3.5</div>
<div class="rh" style="top:614px;background:#f3f3f3">441</div>
<div class="ab" style="left:0;top:630px;width:41px;height:1px;background:#c9c9c9"></div>
<div class="hl" style="left:42px;top:630px;width:1176px"></div>
<div class="c" style="left:16.98px;top:614px;width:77.02px;color:#4a86e8">47482.6</div>
<div class="c" style="left:70.46px;top:614px;width:71.54px;color:#ff0000">5790.0</div>
<div class="c" style="left:118.85px;top:614px;width:67.15px;color:#4a86e8">30.9</div>
<div class="c" style="left:164.01px;top:614px;width:53.99px;color:#000">48.0</div>
<div class="c" style="left:196.39px;top:614px;width:49.61px;color:#4a86e8">80</div>
<div class="c" style="left:223.33px;top:614px;width:61.67px;color:#000">100.0</div>
<div class="c" style="left:262.24px;top:614px;width:62.76px;color:#4a86e8">80</div>
<div class="c" style="left:300.40px;top:614px;width:83.60px;color:#000">10.12</div>
<div class="c" style="left:360.95px;top:614px;width:66.05px;color:#000">0.00</div>
<div class="c cl" style="left:428.00px;top:614px;width:73.73px;color:#000">HomeE</div>
<div class="c" style="left:451.25px;top:614px;width:96.75px;color:#000">2016-05-10</div>
<div class="c" style="left:658.66px;top:614px;width:69.34px;color:#4a86e8">€0.11</div>
<div class="c" style="left:704.66px;top:614px;width:69.34px;color:#4a86e8">€1.08</div>
<div class="c" style="left:750.56px;top:614px;width:70.44px;color:#4a86e8">€0.000</div>
<div class="c" style="left:797.56px;top:614px;width:70.44px;color:#000">€0.00</div>
<div class="c" style="left:888.85px;top:614px;width:67.15px;color:#4a86e8">114.4</div>
<div class="c" style="left:932.75px;top:614px;width:68.25px;color:#4a86e8">280.7</div>
<div class="c" style="left:977.46px;top:614px;width:71.54px;color:#4a86e8">19.46</div>
<div class="c b" style="left:1024.69px;top:614px;width:80.31px;color:#4a86e8">6.3</div>
<div class="c b" style="left:1080.69px;top:614px;width:80.31px;color:#4a86e8">4.4</div>
<div class="c b" style="left:1136.69px;top:614px;width:80.31px;color:#4a86e8">3.1</div>
<div class="rh" style="top:631px;background:#f3f3f3">442</div>
<div class="ab" style="left:0;top:647px;width:41px;height:1px;background:#c9c9c9"></div>
<div class="hl" style="left:42px;top:647px;width:1176px"></div>
<div class="c" style="left:16.98px;top:631px;width:77.02px;color:#4a86e8">47513.5</div>
<div class="c" style="left:70.46px;top:631px;width:71.54px;color:#000">5829.4</div>
<div class="c" style="left:118.85px;top:631px;width:67.15px;color:#4a86e8">39.4</div>
<div class="c" style="left:164.01px;top:631px;width:53.99px;color:#000">74.5</div>
<div class="c" style="left:196.39px;top:631px;width:49.61px;color:#4a86e8">80</div>
<div class="c" style="left:223.33px;top:631px;width:61.67px;color:#000">100.0</div>
<div class="c" style="left:262.24px;top:631px;width:62.76px;color:#4a86e8">80</div>
<div class="c" style="left:300.40px;top:631px;width:83.60px;color:#000">5.76</div>
<div class="c" style="left:360.95px;top:631px;width:66.05px;color:#000">0.00</div>
<div class="c cl" style="left:428.00px;top:631px;width:73.73px;color:#000">Work</div>
<div class="c" style="left:451.25px;top:631px;width:96.75px;color:#000">2016-05-11</div>
<div class="c" style="left:658.66px;top:631px;width:69.34px;color:#4a86e8">€0.00</div>
<div class="c" style="left:704.66px;top:631px;width:69.34px;color:#4a86e8">€0.00</div>
<div class="c" style="left:750.56px;top:631px;width:70.44px;color:#4a86e8">€0.000</div>
<div class="c" style="left:797.56px;top:631px;width:70.44px;color:#000">€0.00</div>
<div class="c" style="left:888.85px;top:631px;width:67.15px;color:#4a86e8">154.5</div>
<div class="c" style="left:932.75px;top:631px;width:68.25px;color:#4a86e8">291.2</div>
<div class="c" style="left:977.46px;top:631px;width:71.54px;color:#4a86e8">22.59</div>
<div class="c b" style="left:1024.69px;top:631px;width:80.31px;color:#4a86e8">3.1</div>
<div class="c b" style="left:1080.69px;top:631px;width:80.31px;color:#4a86e8">2.1</div>
<div class="c b" style="left:1136.69px;top:631px;width:80.31px;color:#4a86e8">1.5</div>
<div class="rh" style="top:648px;background:#f3f3f3">443</div>
<div class="ab" style="left:0;top:664px;width:41px;height:1px;background:#c9c9c9"></div>
<div class="hl" style="left:42px;top:664px;width:1176px"></div>
<div class="c" style="left:16.98px;top:648px;width:77.02px;color:#4a86e8">47552.9</div>
<div class="c" style="left:70.46px;top:648px;width:71.54px;color:#000">5925.1</div>
<div class="c" style="left:118.85px;top:648px;width:67.15px;color:#4a86e8">95.7</div>
<div class="c" style="left:164.01px;top:648px;width:53.99px;color:#000">17.0</div>
<div class="c" style="left:196.39px;top:648px;width:49.61px;color:#4a86e8">80</div>
<div class="c" style="left:223.33px;top:648px;width:61.67px;color:#000">100.0</div>
<div class="c" style="left:262.24px;top:648px;width:62.76px;color:#4a86e8">80</div>
<div class="c" style="left:300.40px;top:648px;width:83.60px;color:#000">16.26</div>
<div class="c" style="left:360.95px;top:648px;width:66.05px;color:#000">0.00</div>
<div class="c cl" style="left:428.00px;top:648px;width:73.73px;color:#000">Work</div>
<div class="c" style="left:451.25px;top:648px;width:96.75px;color:#000">2016-05-12</div>
<div class="c" style="left:658.66px;top:648px;width:69.34px;color:#4a86e8">€0.00</div>
<div class="c" style="left:704.66px;top:648px;width:69.34px;color:#4a86e8">€0.00</div>
<div class="c" style="left:750.56px;top:648px;width:70.44px;color:#4a86e8">€0.000</div>
<div class="c" style="left:797.56px;top:648px;width:70.44px;color:#000">€0.00</div>
<div class="c" style="left:888.85px;top:648px;width:67.15px;color:#4a86e8">115.3</div>
<div class="c" style="left:932.75px;top:648px;width:68.25px;color:#4a86e8">272.2</div>
<div class="c" style="left:977.46px;top:648px;width:71.54px;color:#4a86e8">19.59</div>
<div class="c b" style="left:1024.69px;top:648px;width:80.31px;color:#4a86e8">10.0</div>
<div class="c b" style="left:1080.69px;top:648px;width:80.31px;color:#4a86e8">7.0</div>
<div class="c b" style="left:1136.69px;top:648px;width:80.31px;color:#4a86e8">5.0</div>
<div class="rh" style="top:665px;background:#f3f3f3">444</div>
<div class="ab" style="left:0;top:681px;width:41px;height:1px;background:#c9c9c9"></div>
<div class="hl" style="left:42px;top:681px;width:1176px"></div>
<div class="c" style="left:16.98px;top:665px;width:77.02px;color:#4a86e8">47648.6</div>
<div class="c" style="left:70.46px;top:665px;width:71.54px;color:#000">6020.9</div>
<div class="c" style="left:118.85px;top:665px;width:67.15px;color:#4a86e8">95.8</div>
<div class="c" style="left:164.01px;top:665px;width:53.99px;color:#000">23.5</div>
<div class="c" style="left:196.39px;top:665px;width:49.61px;color:#4a86e8">80</div>
<div class="c" style="left:223.33px;top:665px;width:61.67px;color:#000">100.0</div>
<div class="c" style="left:262.24px;top:665px;width:62.76px;color:#4a86e8">80</div>
<div class="c" style="left:300.40px;top:665px;width:83.60px;color:#000">14.82</div>
<div class="c" style="left:360.95px;top:665px;width:66.05px;color:#000">0.00</div>
<div class="c cl" style="left:428.00px;top:665px;width:73.73px;color:#000">Work</div>
<div class="c" style="left:451.25px;top:665px;width:96.75px;color:#000">2016-05-13</div>
<div class="c" style="left:658.66px;top:665px;width:69.34px;color:#4a86e8">€0.00</div>
<div class="c" style="left:704.66px;top:665px;width:69.34px;color:#4a86e8">€0.00</div>
<div class="c" style="left:750.56px;top:665px;width:70.44px;color:#4a86e8">€0.000</div>
<div class="c" style="left:797.56px;top:665px;width:70.44px;color:#000">€0.00</div>
<div class="c" style="left:888.85px;top:665px;width:67.15px;color:#4a86e8">125.2</div>
<div class="c" style="left:932.75px;top:665px;width:68.25px;color:#4a86e8">280.8</div>
<div class="c" style="left:977.46px;top:665px;width:71.54px;color:#4a86e8">19.37</div>
<div class="c b" style="left:1024.69px;top:665px;width:80.31px;color:#4a86e8">9.2</div>
<div class="c b" style="left:1080.69px;top:665px;width:80.31px;color:#4a86e8">6.4</div>
<div class="c b" style="left:1136.69px;top:665px;width:80.31px;color:#4a86e8">4.6</div>
<div class="rh" style="top:682px;background:#dddddd">445</div>
<div class="ab" style="left:0;top:698px;width:41px;height:1px;background:#c9c9c9"></div>
<div class="hl" style="left:42px;top:698px;width:1176px"></div>
<div class="c" style="left:16.98px;top:682px;width:77.02px;color:#4a86e8">47744.4</div>
<div class="c" style="left:70.46px;top:682px;width:71.54px;color:#000">6113.3</div>
<div class="c" style="left:118.85px;top:682px;width:67.15px;color:#4a86e8">92.4</div>
<div class="c" style="left:164.01px;top:682px;width:53.99px;color:#000">23.5</div>
<div class="c" style="left:196.39px;top:682px;width:49.61px;color:#4a86e8">80</div>
<div class="c" style="left:223.33px;top:682px;width:61.67px;color:#000">27.5</div>
<div class="c" style="left:262.24px;top:682px;width:62.76px;color:#4a86e8">80</div>
<div class="c" style="left:300.40px;top:682px;width:83.60px;color:#000">1.00</div>
<div class="c" style="left:360.95px;top:682px;width:66.05px;color:#000">0.00</div>
<div class="c cl" style="left:428.00px;top:682px;width:73.73px;color:#000">MobiE</div>
<div class="cm" style="left:471px;top:682px"></div>
<div class="c" style="left:451.25px;top:682px;width:96.75px;color:#000">2016-05-13</div>
<div class="c" style="left:524.85px;top:682px;width:67.15px;color:#000">0:10</div>
<div class="c" style="left:568.18px;top:682px;width:74.82px;color:#4a86e8">5.66</div>
<div class="c" style="left:620.33px;top:682px;width:61.67px;color:#4a86e8">25.16</div>
<div class="c" style="left:658.66px;top:682px;width:69.34px;color:#4a86e8">€0.00</div>
<div class="c" style="left:704.66px;top:682px;width:69.34px;color:#4a86e8">€0.00</div>
<div class="c" style="left:750.56px;top:682px;width:70.44px;color:#4a86e8">€0.000</div>
<div class="c" style="left:797.56px;top:682px;width:70.44px;color:#000">€0.00</div>
<div class="c" style="left:888.85px;top:682px;width:67.15px;color:#4a86e8">120.8</div>
<div class="c" style="left:932.75px;top:682px;width:68.25px;color:#4a86e8">277.4</div>
<div class="c" style="left:977.46px;top:682px;width:71.54px;color:#4a86e8">25.00</div>
<div class="c b" style="left:1024.69px;top:682px;width:80.31px;color:#4a86e8">9.2</div>
<div class="c b" style="left:1080.69px;top:682px;width:80.31px;color:#4a86e8">6.4</div>
<div class="c b" style="left:1136.69px;top:682px;width:80.31px;color:#4a86e8">4.6</div>
<div class="rh" style="top:699px;background:#f3f3f3">446</div>
<div class="ab" style="left:0;top:715px;width:41px;height:1px;background:#c9c9c9"></div>
<div class="hl" style="left:42px;top:715px;width:1176px"></div>
<div class="c" style="left:16.98px;top:699px;width:77.02px;color:#4a86e8">47836.8</div>
<div class="c" style="left:70.46px;top:699px;width:71.54px;color:#000">6124.1</div>
<div class="c" style="left:118.85px;top:699px;width:67.15px;color:#4a86e8">10.8</div>
<div class="c" style="left:164.01px;top:699px;width:53.99px;color:#000">18.5</div>
<div class="c" style="left:196.39px;top:699px;width:49.61px;color:#4a86e8">80</div>
<div class="c" style="left:223.33px;top:699px;width:61.67px;color:#000">58.0</div>
<div class="c" style="left:262.24px;top:699px;width:62.76px;color:#4a86e8">80</div>
<div class="c" style="left:300.40px;top:699px;width:83.60px;color:#000">7.21</div>
<div class="c" style="left:360.95px;top:699px;width:66.05px;color:#000">0.00</div>
<div class="c cl" style="left:428.00px;top:699px;width:73.73px;color:#000">Outro</div>
<div class="cm" style="left:471px;top:699px"></div>
<div class="c" style="left:451.25px;top:699px;width:96.75px;color:#000">2016-05-13</div>
<div class="c" style="left:524.85px;top:699px;width:67.15px;color:#000">3:11</div>
<div class="c" style="left:568.18px;top:699px;width:74.82px;color:#4a86e8">2.26</div>
<div class="c" style="left:620.33px;top:699px;width:61.67px;color:#4a86e8">10.07</div>
<div class="c" style="left:658.66px;top:699px;width:69.34px;color:#4a86e8">€0.00</div>
<div class="c" style="left:704.66px;top:699px;width:69.34px;color:#4a86e8">€0.00</div>
<div class="c" style="left:750.56px;top:699px;width:70.44px;color:#4a86e8">€0.000</div>
<div class="c" style="left:797.56px;top:699px;width:70.44px;color:#000">€0.00</div>
<div class="c" style="left:888.85px;top:699px;width:67.15px;color:#4a86e8">120.0</div>
<div class="c" style="left:932.75px;top:699px;width:68.25px;color:#4a86e8">284.2</div>
<div class="c" style="left:977.46px;top:699px;width:71.54px;color:#4a86e8">18.25</div>
<div class="c b" style="left:1024.69px;top:699px;width:80.31px;color:#4a86e8">9.8</div>
<div class="c b" style="left:1080.69px;top:699px;width:80.31px;color:#4a86e8">6.9</div>
<div class="c b" style="left:1136.69px;top:699px;width:80.31px;color:#4a86e8">4.9</div>
<div class="rh" style="top:716px;background:#f3f3f3">447</div>
<div class="ab" style="left:0;top:732px;width:41px;height:1px;background:#c9c9c9"></div>
<div class="hl" style="left:42px;top:732px;width:1176px"></div>
<div class="c" style="left:16.98px;top:716px;width:77.02px;color:#4a86e8">47847.6</div>
<div class="c" style="left:70.46px;top:716px;width:71.54px;color:#000">6166.9</div>
<div class="c" style="left:118.85px;top:716px;width:67.15px;color:#4a86e8">42.8</div>
<div class="c" style="left:164.01px;top:716px;width:53.99px;color:#000">24.0</div>
<div class="c" style="left:196.39px;top:716px;width:49.61px;color:#4a86e8">80</div>
<div class="c" style="left:223.33px;top:716px;width:61.67px;color:#000">100.0</div>
<div class="c" style="left:262.24px;top:716px;width:62.76px;color:#4a86e8">80</div>
<div class="c" style="left:300.40px;top:716px;width:83.60px;color:#000">15.03</div>
<div class="c" style="left:360.95px;top:716px;width:66.05px;color:#000">0.00</div>
<div class="c cl" style="left:428.00px;top:716px;width:73.73px;color:#000">HomeE</div>
<div class="c" style="left:451.25px;top:716px;width:96.75px;color:#000">2016-05-13</div>
<div class="c" style="left:658.66px;top:716px;width:69.34px;color:#4a86e8">€0.11</div>
<div class="c" style="left:704.66px;top:716px;width:69.34px;color:#4a86e8">€1.61</div>
<div class="c" style="left:750.56px;top:716px;width:70.44px;color:#4a86e8">€0.000</div>
<div class="c" style="left:797.56px;top:716px;width:70.44px;color:#000">€0.00</div>
<div class="c" style="left:888.85px;top:716px;width:67.15px;color:#4a86e8">125.9</div>
<div class="c" style="left:932.75px;top:716px;width:68.25px;color:#4a86e8">283.4</div>
<div class="c" style="left:977.46px;top:716px;width:71.54px;color:#4a86e8">19.78</div>
<div class="c b" style="left:1024.69px;top:716px;width:80.31px;color:#4a86e8">9.1</div>
<div class="c b" style="left:1080.69px;top:716px;width:80.31px;color:#4a86e8">6.4</div>
<div class="c b" style="left:1136.69px;top:716px;width:80.31px;color:#4a86e8">4.6</div>
<div class="rh" style="top:733px;background:#f3f3f3">448</div>
<div class="ab" style="left:0;top:749px;width:41px;height:1px;background:#c9c9c9"></div>
<div class="hl" style="left:42px;top:749px;width:1176px"></div>
<div class="c" style="left:16.98px;top:733px;width:77.02px;color:#4a86e8">47890.4</div>
<div class="c" style="left:70.46px;top:733px;width:71.54px;color:#000">6281.0</div>
<div class="c" style="left:118.85px;top:733px;width:67.15px;color:#4a86e8">114.1</div>
<div class="c" style="left:164.01px;top:733px;width:53.99px;color:#000">14.5</div>
<div class="c" style="left:196.39px;top:733px;width:49.61px;color:#4a86e8">80</div>
<div class="c" style="left:223.33px;top:733px;width:61.67px;color:#000">100.0</div>
<div class="c" style="left:262.24px;top:733px;width:62.76px;color:#4a86e8">80</div>
<div class="c" style="left:300.40px;top:733px;width:83.60px;color:#000">16.61</div>
<div class="c" style="left:360.95px;top:733px;width:66.05px;color:#000">0.00</div>
<div class="c cl" style="left:428.00px;top:733px;width:73.73px;color:#000">Work</div>
<div class="c" style="left:451.25px;top:733px;width:96.75px;color:#000">2016-05-17</div>
<div class="c" style="left:658.66px;top:733px;width:69.34px;color:#4a86e8">€0.00</div>
<div class="c" style="left:704.66px;top:733px;width:69.34px;color:#4a86e8">€0.00</div>
<div class="c" style="left:750.56px;top:733px;width:70.44px;color:#4a86e8">€0.000</div>
<div class="c" style="left:797.56px;top:733px;width:70.44px;color:#000">€0.00</div>
<div class="c" style="left:888.85px;top:733px;width:67.15px;color:#4a86e8">133.5</div>
<div class="c" style="left:932.75px;top:733px;width:68.25px;color:#4a86e8">287.3</div>
<div class="c" style="left:977.46px;top:733px;width:71.54px;color:#4a86e8">19.43</div>
<div class="c b" style="left:1024.69px;top:733px;width:80.31px;color:#4a86e8">10.3</div>
<div class="c b" style="left:1080.69px;top:733px;width:80.31px;color:#4a86e8">7.2</div>
<div class="c b" style="left:1136.69px;top:733px;width:80.31px;color:#4a86e8">5.1</div>
<div class="rh" style="top:750px;background:#f3f3f3">449</div>
<div class="ab" style="left:0;top:766px;width:41px;height:1px;background:#c9c9c9"></div>
<div class="hl" style="left:42px;top:766px;width:1176px"></div>
<div class="c" style="left:16.98px;top:750px;width:77.02px;color:#4a86e8">48004.5</div>
<div class="c" style="left:70.46px;top:750px;width:71.54px;color:#000">6351.1</div>
<div class="c" style="left:118.85px;top:750px;width:67.15px;color:#4a86e8">70.1</div>
<div class="c" style="left:164.01px;top:750px;width:53.99px;color:#000">44.5</div>
<div class="c" style="left:196.39px;top:750px;width:49.61px;color:#4a86e8">80</div>
<div class="c" style="left:223.33px;top:750px;width:61.67px;color:#000">87.0</div>
<div class="c" style="left:262.24px;top:750px;width:62.76px;color:#4a86e8">80</div>
<div class="c" style="left:300.40px;top:750px;width:83.60px;color:#000">7.36</div>
<div class="c" style="left:360.95px;top:750px;width:66.05px;color:#000">0.00</div>
<div class="c cl" style="left:428.00px;top:750px;width:73.73px;color:#000">Work</div>
<div class="c" style="left:451.25px;top:750px;width:96.75px;color:#000">2016-05-18</div>
<div class="c" style="left:524.85px;top:750px;width:67.15px;color:#000">3:15</div>
<div class="c" style="left:568.18px;top:750px;width:74.82px;color:#4a86e8">2.26</div>
<div class="c" style="left:620.33px;top:750px;width:61.67px;color:#4a86e8">10.06</div>
<div class="c" style="left:658.66px;top:750px;width:69.34px;color:#4a86e8">€0.00</div>
<div class="c" style="left:704.66px;top:750px;width:69.34px;color:#4a86e8">€0.00</div>
<div class="c" style="left:750.56px;top:750px;width:70.44px;color:#4a86e8">€0.000</div>
<div class="c" style="left:797.56px;top:750px;width:70.44px;color:#000">€0.00</div>
<div class="c" style="left:888.85px;top:750px;width:67.15px;color:#4a86e8">126.3</div>
<div class="c" style="left:932.75px;top:750px;width:68.25px;color:#4a86e8">282.6</div>
<div class="c" style="left:977.46px;top:750px;width:71.54px;color:#4a86e8">17.32</div>
<div class="c b" style="left:1024.69px;top:750px;width:80.31px;color:#4a86e8">6.7</div>
<div class="c b" style="left:1080.69px;top:750px;width:80.31px;color:#4a86e8">4.7</div>
<div class="c b" style="left:1136.69px;top:750px;width:80.31px;color:#4a86e8">3.3</div>
<div class="rh" style="top:767px;background:#f3f3f3">450</div>
<div class="ab" style="left:0;top:783px;width:41px;height:1px;background:#c9c9c9"></div>
<div class="hl" style="left:42px;top:783px;width:1176px"></div>
<div class="c" style="left:16.98px;top:767px;width:77.02px;color:#4a86e8">48074.6</div>
<div class="c" style="left:70.46px;top:767px;width:71.54px;color:#000">6375.2</div>
<div class="c" style="left:118.85px;top:767px;width:67.15px;color:#4a86e8">24.1</div>
<div class="c" style="left:164.01px;top:767px;width:53.99px;color:#000">67.0</div>
<div class="c" style="left:196.39px;top:767px;width:49.61px;color:#4a86e8">80</div>
<div class="c" style="left:223.33px;top:767px;width:61.67px;color:#000">99.0</div>
<div class="c" style="left:262.24px;top:767px;width:62.76px;color:#4a86e8">80</div>
<div class="c" style="left:300.40px;top:767px;width:83.60px;color:#000">6.33</div>
<div class="c" style="left:360.95px;top:767px;width:66.05px;color:#000">0.00</div>
<div class="c cl" style="left:428.00px;top:767px;width:73.73px;color:#000">Work</div>
<div class="c" style="left:451.25px;top:767px;width:96.75px;color:#000">2016-05-18</div>
<div class="c" style="left:524.85px;top:767px;width:67.15px;color:#000">3:03</div>
<div class="c" style="left:568.18px;top:767px;width:74.82px;color:#4a86e8">2.08</div>
<div class="c" style="left:620.33px;top:767px;width:61.67px;color:#4a86e8">9.22</div>
<div class="c" style="left:658.66px;top:767px;width:69.34px;color:#4a86e8">€0.00</div>
<div class="c" style="left:704.66px;top:767px;width:69.34px;color:#4a86e8">€0.00</div>
<div class="c" style="left:750.56px;top:767px;width:70.44px;color:#4a86e8">€0.000</div>
<div class="c" style="left:797.56px;top:767px;width:70.44px;color:#000">€0.00</div>
<div class="c" style="left:888.85px;top:767px;width:67.15px;color:#4a86e8">120.5</div>
<div class="c" style="left:932.75px;top:767px;width:68.25px;color:#4a86e8">283.1</div>
<div class="c" style="left:977.46px;top:767px;width:71.54px;color:#4a86e8">19.78</div>
<div class="c b" style="left:1024.69px;top:767px;width:80.31px;color:#4a86e8">4.0</div>
<div class="c b" style="left:1080.69px;top:767px;width:80.31px;color:#4a86e8">2.8</div>
<div class="c b" style="left:1136.69px;top:767px;width:80.31px;color:#4a86e8">2.0</div>
<div class="rh" style="top:784px;background:#f3f3f3">451</div>
<div class="ab" style="left:0;top:800px;width:41px;height:1px;background:#c9c9c9"></div>
<div class="hl" style="left:42px;top:800px;width:1176px"></div>
<div class="c" style="left:16.98px;top:784px;width:77.02px;color:#4a86e8">48098.7</div>
<div class="c" style="left:70.46px;top:784px;width:71.54px;color:#000">6477.9</div>
<div class="c" style="left:118.85px;top:784px;width:67.15px;color:#4a86e8">102.7</div>
<div class="c" style="left:164.01px;top:784px;width:53.99px;color:#000">22.5</div>
<div class="c" style="left:196.39px;top:784px;width:49.61px;color:#4a86e8">80</div>
<div class="c" style="left:223.33px;top:784px;width:61.67px;color:#000">100.0</div>
<div class="c" style="left:262.24px;top:784px;width:62.76px;color:#4a86e8">80</div>
<div class="c" style="left:300.40px;top:784px;width:83.60px;color:#000">14.89</div>
<div class="c" style="left:360.95px;top:784px;width:66.05px;color:#000">0.00</div>
<div class="c cl" style="left:428.00px;top:784px;width:73.73px;color:#000">HomeE</div>
<div class="c" style="left:451.25px;top:784px;width:96.75px;color:#000">2016-05-21</div>
<div class="c" style="left:658.66px;top:784px;width:69.34px;color:#4a86e8">€0.11</div>
<div class="c" style="left:704.66px;top:784px;width:69.34px;color:#4a86e8">€1.59</div>
<div class="c" style="left:750.56px;top:784px;width:70.44px;color:#4a86e8">€0.000</div>
<div class="c" style="left:797.56px;top:784px;width:70.44px;color:#000">€0.00</div>
<div class="c" style="left:888.85px;top:784px;width:67.15px;color:#4a86e8">134.2</div>
<div class="c" style="left:932.75px;top:784px;width:68.25px;color:#4a86e8">287.7</div>
<div class="c" style="left:977.46px;top:784px;width:71.54px;color:#4a86e8">19.21</div>
<div class="c b" style="left:1024.69px;top:784px;width:80.31px;color:#4a86e8">9.3</div>
<div class="c b" style="left:1080.69px;top:784px;width:80.31px;color:#4a86e8">6.5</div>
<div class="c b" style="left:1136.69px;top:784px;width:80.31px;color:#4a86e8">4.7</div>
<div class="ab" style="left:41px;top:84px;width:1px;height:711px;background:#cbcbcb"></div>
<div class="vl" style="left:94px;top:84px;height:711px"></div>
<div class="vl" style="left:142px;top:84px;height:711px"></div>
<div class="vl" style="left:186px;top:84px;height:711px"></div>
<div class="vl" style="left:218px;top:84px;height:711px"></div>
<div class="vl" style="left:246px;top:84px;height:711px"></div>
<div class="vl" style="left:285px;top:84px;height:711px"></div>
<div class="vl" style="left:325px;top:84px;height:711px"></div>
<div class="vl" style="left:384px;top:84px;height:711px"></div>
<div class="vl" style="left:427px;top:84px;height:711px"></div>
<div class="vl" style="left:477px;top:84px;height:711px"></div>
<div class="vl" style="left:548px;top:84px;height:711px"></div>
<div class="vl" style="left:592px;top:84px;height:711px"></div>
<div class="vl" style="left:643px;top:84px;height:711px"></div>
<div class="vl" style="left:682px;top:84px;height:711px"></div>
<div class="vl" style="left:728px;top:84px;height:711px"></div>
<div class="vl" style="left:774px;top:84px;height:711px"></div>
<div class="vl" style="left:821px;top:84px;height:711px"></div>
<div class="vl" style="left:868px;top:84px;height:711px"></div>
<div class="vl" style="left:912px;top:84px;height:711px"></div>
<div class="vl" style="left:956px;top:84px;height:711px"></div>
<div class="vl" style="left:1001px;top:84px;height:711px"></div>
<div class="vl" style="left:1049px;top:84px;height:711px"></div>
<div class="vl" style="left:1105px;top:84px;height:711px"></div>
<div class="vl" style="left:1161px;top:84px;height:711px"></div>
<div class="vl" style="left:1217px;top:84px;height:711px"></div>
<div class="ab" style="left:0;top:795px;width:1232px;height:1px;background:#d9d9d9"></div>
<div class="ab" style="left:0;top:796px;width:1232px;height:7px;background:#f7f7f7"></div>
<div class="ab" style="left:0;top:796px;width:41px;height:7px;background:#f4f4f4"></div>
<div class="ab" style="left:41px;top:796px;width:1px;height:7px;background:#cfcfcf"></div>
<div class="ab" style="left:42px;top:796px;width:1px;height:7px;background:#d8dde7"></div>
<div class="ab" style="left:43px;top:796px;width:1px;height:7px;background:#e2e2e2"></div>
<div class="ab" style="left:1001px;top:681px;width:49px;height:18px;border:2px solid #4285f4"></div>
<div class="ab" style="left:1045px;top:694px;width:8px;height:8px;background:#4285f4;border:1px solid #fff"></div>
<svg class="ab" style="left:0;top:0" width="1232" height="803" viewBox="0 0 1232 803"><g fill="none" stroke="#ff0a0a" stroke-width="2.2" stroke-linecap="round" stroke-linejoin="round">
<path d="M425.0 45.5 C423.0 45.2 416.9 44.7 412.9 43.9 C408.8 43.1 404.8 41.5 400.7 40.6 C396.6 39.7 392.6 39.2 388.5 38.2 C384.4 37.2 379.8 36.0 376.4 34.9 C373.0 33.8 372.3 32.0 368.2 31.3 C364.1 30.6 357.5 30.8 352.0 30.5 C346.5 30.2 341.9 29.8 335.0 29.7 C328.1 29.6 318.1 29.4 310.7 29.7 C303.3 30.0 295.8 30.6 290.4 31.3 C285.0 32.0 281.2 32.7 278.2 34.1 C275.2 35.5 274.0 38.0 272.6 39.8 C271.2 41.6 270.2 42.9 269.7 44.7 C269.1 46.5 268.8 48.8 269.3 50.4 C269.8 52.0 270.4 53.2 272.6 54.4 C274.8 55.6 278.0 56.8 282.3 57.7 C286.6 58.7 293.1 59.4 298.5 60.1 C303.9 60.8 309.4 61.2 314.8 61.7 C320.2 62.2 326.3 62.9 331.0 63.3 C335.7 63.7 339.7 64.0 343.2 64.1 C346.7 64.2 349.2 64.0 352.0 63.7 C354.8 63.4 356.0 63.2 360.1 62.5 C364.2 61.8 371.0 60.2 376.4 59.3 C381.8 58.3 387.2 57.3 392.6 56.8 C398.0 56.2 403.2 56.3 408.8 56.0 C414.4 55.7 423.0 55.0 425.9 54.8"/>
<path d="M425.9 54.8 C426.0 54.1 426.2 52.4 426.3 50.4 C426.4 48.4 427.1 44.5 426.7 43.0 C426.3 41.5 424.6 41.7 424.2 41.4"/>
<path d="M222.8 687.1 C221.8 686.5 219.0 684.8 216.9 683.7 C214.8 682.7 213.3 681.5 210.1 680.8 C206.9 680.1 200.7 679.5 197.5 679.4 C194.3 679.3 192.5 679.6 190.7 680.3 C188.9 680.9 187.9 681.6 186.8 683.3 C185.7 685.0 184.3 688.3 184.3 690.6 C184.3 692.9 184.6 695.4 186.8 696.9 C189.0 698.4 193.4 699.3 197.5 699.5 C201.6 699.7 207.5 698.9 211.1 697.9 C214.7 696.9 217.3 695.0 218.9 693.5 C220.5 692.0 220.6 689.9 220.8 688.6 C221.0 687.3 220.4 686.0 220.3 685.5"/>
<path d="M286.0 684.7 C285.0 684.1 283.6 682.2 280.2 681.3 C276.8 680.4 270.0 679.3 265.6 679.4 C261.2 679.5 256.5 680.6 254.0 681.8 C251.5 683.0 251.0 684.5 250.5 686.7 C250.0 688.9 249.8 693.2 251.0 694.9 C252.2 696.6 255.4 695.8 257.8 696.9 C260.2 698.0 262.7 700.3 265.6 701.3 C268.5 702.3 272.1 703.0 275.4 702.7 C278.6 702.4 282.8 701.2 285.1 699.3 C287.5 697.4 288.9 693.6 289.5 691.5 C290.1 689.4 289.5 688.0 289.0 686.7 C288.5 685.4 286.9 684.0 286.5 683.5"/>
<path d="M389.1 685.6 C387.8 685.2 384.3 684.1 381.1 683.4 C377.9 682.6 373.8 681.9 369.8 681.1 C365.8 680.3 361.1 678.9 357.3 678.8 C353.5 678.7 349.5 679.3 347.0 680.5 C344.5 681.7 343.3 683.6 342.5 686.0 C341.7 688.4 341.2 693.2 342.0 694.7 C342.8 696.2 345.2 694.2 347.0 694.7 C348.8 695.2 349.8 696.8 352.7 697.6 C355.6 698.5 359.4 699.6 364.1 699.8 C368.8 700.0 377.2 699.2 381.1 698.7 C385.0 698.2 386.1 698.2 387.4 697.0 C388.7 695.8 389.1 693.0 389.1 691.3 C389.1 689.6 387.7 687.5 387.4 686.8"/>
</g></svg>
</body></html>
